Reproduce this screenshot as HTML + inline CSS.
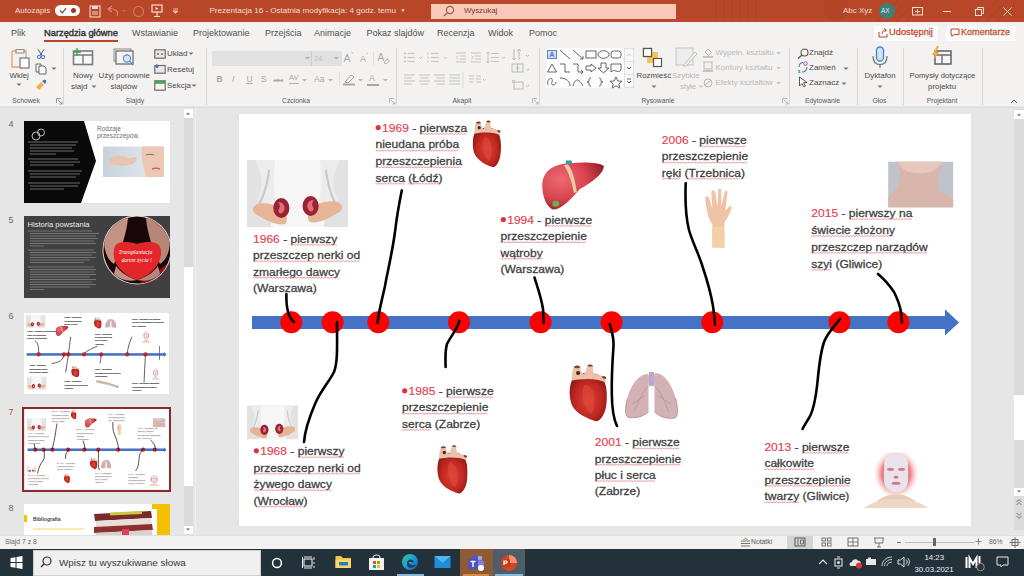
<!DOCTYPE html>
<html><head><meta charset="utf-8">
<style>
*{margin:0;padding:0;box-sizing:border-box}
html,body{width:1024px;height:576px;overflow:hidden;background:#e6e6e6;font-family:"Liberation Sans",sans-serif}
.a{position:absolute}
.t{position:absolute;white-space:nowrap;line-height:1}
#title{left:0;top:0;width:1024px;height:22px;background:#b8472a}
#tabs{left:0;top:22px;width:1024px;height:22px;background:#f3f2f1}
#ribbon{left:0;top:44px;width:1024px;height:62px;background:#f3f2f1}
.tab{position:absolute;top:29px;font-size:9px;color:#505050;white-space:nowrap;line-height:1;}
.gl{position:absolute;top:98px;font-size:6.8px;color:#5a5a5a;white-space:nowrap;line-height:1;transform:translateX(-50%)}
.sep{position:absolute;top:48px;width:1px;height:57px;background:#d8d8d8}
.rl{position:absolute;font-size:8px;color:#4a4a4a;white-space:nowrap;line-height:1}
.dis{color:#b9b9b9}
.ic{position:absolute;overflow:visible}
#status{left:0;top:535px;width:1024px;height:14px;background:#f3f2f1}
#taskbar{left:0;top:549px;width:1024px;height:27px;background:#22313a}
.thumb{position:absolute;background:#fff}
</style></head><body>

<!-- TITLE BAR -->
<div id="title" class="a"></div>
<div class="t" style="left:15px;top:7px;font-size:8px;color:#f6dcd3">Autozapis</div>
<div class="a" style="left:54.5px;top:5px;width:25px;height:11px;border-radius:6px;background:#fff"></div>
<svg class="ic" style="left:59px;top:7px" width="8" height="7"><path d="M1,3.5 L3.3,5.8 L7,1.2" stroke="#8b3a2a" stroke-width="1.2" fill="none"/></svg>
<div class="a" style="left:71px;top:8px;width:5px;height:5px;border-radius:3px;background:#9a3a22"></div>
<svg class="ic" style="left:89px;top:5px" width="12" height="13"><rect x="1" y="1" width="10" height="11" fill="none" stroke="#f4d6cc" stroke-width="1.1"/><rect x="3" y="1" width="6" height="3" fill="#f4d6cc"/><path d="M3,7 h6 M3,9 h6" stroke="#f4d6cc" stroke-width="1"/></svg>
<svg class="ic" style="left:106px;top:5px" width="22" height="12"><path d="M2,4 L6,1 M2,4 L6,7 M2,4 C9,3 13,6 11,11" stroke="#d88a78" stroke-width="1.1" fill="none"/><path d="M16,5 l2,2 l2,-2" fill="#c9755f"/></svg>
<svg class="ic" style="left:132px;top:4px" width="13" height="14"><circle cx="6.5" cy="7.5" r="5" fill="none" stroke="#d07a65" stroke-width="1.1"/></svg>
<svg class="ic" style="left:151px;top:4px" width="12" height="14"><rect x="1" y="1" width="10" height="7" fill="none" stroke="#f6dcd3" stroke-width="1.2"/><path d="M6,8 V12 M3,12.5 H9" stroke="#f6dcd3" stroke-width="1.2"/><path d="M4.5,3 L7.5,4.5 L4.5,6Z" fill="#f6dcd3"/></svg>
<svg class="ic" style="left:172px;top:8px" width="7" height="6"><path d="M1,1 h5 M1,3 l2.5,2.5 l2.5,-2.5z" stroke="#e9b9aa" stroke-width="1" fill="#e9b9aa"/></svg>
<div class="t" style="left:209.5px;top:7px;font-size:8.05px;color:#f6dcd3">Prezentacja 16 - Ostatnia modyfikacja: 4 godz. temu&nbsp;&nbsp;<span style="font-size:5px;vertical-align:1.5px">▼</span></div>
<div class="a" style="left:431px;top:3.5px;width:245px;height:15.5px;background:#f8c9b8"></div>
<svg class="ic" style="left:443px;top:5px" width="12" height="12"><circle cx="7" cy="5" r="3.6" fill="none" stroke="#8a5a50" stroke-width="1.1"/><path d="M4.4,7.6 L1,11" stroke="#8a5a50" stroke-width="1.2"/></svg>
<div class="t" style="left:464px;top:7px;font-size:7.8px;color:#6e3e34">Wyszukaj</div>
<!-- stripes deco right -->
<div class="a" style="left:0;top:18.5px;width:1024px;height:3.5px;background:#bf4630"></div>
<svg class="ic" style="left:676px;top:0" width="348" height="22"><g stroke="#a8401f" stroke-width="1.5" opacity="0.35"><path d="M40,0 V22 M48,0 V22 M56,0 V22 M64,0 V22 M72,0 V22 M80,0 V22"/><path d="M200,22 L222,0 M210,22 L232,0 M220,22 L242,0 M230,22 L252,0 M300,22 L322,0 M310,22 L332,0 M320,22 L342,0"/></g><circle cx="160" cy="8" r="13" fill="#a8401f" opacity="0.3"/></svg>
<div class="t" style="left:843px;top:7px;font-size:8px;color:#f6dcd3">Abc Xyz</div>
<div class="a" style="left:878.5px;top:3px;width:16px;height:16px;border-radius:8px;background:#3f7d75"></div>
<div class="t" style="left:881px;top:7.5px;font-size:6.5px;color:#dfeeea">AX</div>
<svg class="ic" style="left:912px;top:7px" width="11" height="9"><rect x="0.5" y="0.5" width="10" height="7.5" fill="none" stroke="#f6dcd3" stroke-width="1"/><path d="M3,4.5 h5 M5.5,2.5 v4" stroke="#f6dcd3" stroke-width="0.9"/></svg>
<div class="a" style="left:943px;top:11px;width:8px;height:1px;background:#f6dcd3"></div>
<svg class="ic" style="left:975px;top:7px" width="10" height="10"><rect x="0.5" y="2.5" width="6" height="6" fill="none" stroke="#f6dcd3" stroke-width="1"/><path d="M2.5,2.5 V0.5 H8.5 V6.5 H6.5" fill="none" stroke="#f6dcd3" stroke-width="1"/></svg>
<svg class="ic" style="left:1003px;top:7px" width="9" height="9"><path d="M0.5,0.5 L8.5,8.5 M8.5,0.5 L0.5,8.5" stroke="#f6dcd3" stroke-width="1"/></svg>

<!-- TABS -->
<div id="tabs" class="a"></div>
<div class="tab" style="left:11px">Plik</div>
<div class="tab" style="left:44px;color:#333;font-size:9.3px;top:28.5px;-webkit-text-stroke:0.4px #333">Narzędzia główne</div>
<div class="a" style="left:44px;top:40px;width:74px;height:2px;background:#b8472a"></div>
<div class="tab" style="left:132px">Wstawianie</div>
<div class="tab" style="left:193px">Projektowanie</div>
<div class="tab" style="left:265px">Przejścia</div>
<div class="tab" style="left:314px">Animacje</div>
<div class="tab" style="left:366.5px">Pokaz slajdów</div>
<div class="tab" style="left:437px">Recenzja</div>
<div class="tab" style="left:488px">Widok</div>
<div class="tab" style="left:529px">Pomoc</div>
<div class="a" style="left:874px;top:25.5px;width:64px;height:15px;background:#fbfbfb"></div>
<svg class="ic" style="left:878px;top:28px" width="10" height="10"><path d="M1,4 V9 H9 V6 M4,6 C4,3 6,2 8,2 M6,0.5 L8.5,2 L6.5,4" stroke="#b8472a" stroke-width="1" fill="none"/></svg>
<div class="t" style="left:889px;top:28px;font-size:9.3px;color:#bf5236;-webkit-text-stroke:0.3px #bf5236">Udostępnij</div>
<div class="a" style="left:945.5px;top:25.5px;width:70px;height:15px;background:#fbfbfb"></div>
<svg class="ic" style="left:950px;top:28px" width="10" height="10"><path d="M1,1 H9 V6.5 H4 L2,8.5 V6.5 H1Z" stroke="#b8472a" stroke-width="1" fill="none"/></svg>
<div class="t" style="left:961px;top:28px;font-size:9.1px;color:#bf5236;-webkit-text-stroke:0.3px #bf5236">Komentarze</div>

<div id="ribbon" class="a"></div>
<div class="sep" style="left:63px"></div>
<div class="sep" style="left:206px"></div>
<div class="sep" style="left:395.5px"></div>
<div class="sep" style="left:538.5px"></div>
<div class="sep" style="left:789px"></div>
<div class="sep" style="left:857px"></div>
<div class="sep" style="left:903px"></div>
<div class="sep" style="left:982px"></div>
<div class="gl" style="left:26px">Schowek</div>
<div class="gl" style="left:135px">Slajdy</div>
<div class="gl" style="left:296px">Czcionka</div>
<div class="gl" style="left:462px">Akapit</div>
<div class="gl" style="left:658px">Rysowanie</div>
<div class="gl" style="left:822.5px">Edytowanie</div>
<div class="gl" style="left:879.5px">Głos</div>
<div class="gl" style="left:942px">Projektant</div>
<!-- launchers -->
<svg class="ic" style="left:56px;top:98px" width="7" height="7"><path d="M0.5,0.5 H5 M0.5,0.5 V5 M2,2 L6,6 M6,3.5 V6 H3.5" stroke="#888" stroke-width="0.8" fill="none"/></svg>
<svg class="ic" style="left:389px;top:98px" width="7" height="7"><path d="M0.5,0.5 H5 M0.5,0.5 V5 M2,2 L6,6 M6,3.5 V6 H3.5" stroke="#aaa" stroke-width="0.8" fill="none"/></svg>
<svg class="ic" style="left:532px;top:98px" width="7" height="7"><path d="M0.5,0.5 H5 M0.5,0.5 V5 M2,2 L6,6 M6,3.5 V6 H3.5" stroke="#aaa" stroke-width="0.8" fill="none"/></svg>
<svg class="ic" style="left:782px;top:98px" width="7" height="7"><path d="M0.5,0.5 H5 M0.5,0.5 V5 M2,2 L6,6 M6,3.5 V6 H3.5" stroke="#aaa" stroke-width="0.8" fill="none"/></svg>
<svg class="ic" style="left:1010px;top:99px" width="8" height="5"><path d="M1,4 L4,1 L7,4" stroke="#555" stroke-width="1" fill="none"/></svg>

<!-- SCHOWEK -->
<svg class="ic" style="left:10px;top:48px" width="22" height="22"><path d="M2,3 H6 M14,3 H16 V10 M2,3 V19 H9" stroke="#e3a462" stroke-width="1.3" fill="none"/><path d="M6,1.5 H14 V5 H6Z" fill="none" stroke="#8a8a8a" stroke-width="1.1"/><rect x="10" y="10" width="9" height="10" fill="#fff" stroke="#6a6a6a" stroke-width="1.1"/></svg>
<div class="rl" style="left:9.5px;top:72px;font-size:7.9px">Wklej</div>
<svg class="ic" style="left:16px;top:83px" width="6" height="4"><path d="M0.5,0.5 L3,3 L5.5,0.5Z" fill="#777"/></svg>
<svg class="ic" style="left:36px;top:48.5px" width="10" height="10"><path d="M2,0.5 L6.5,7 M8,0.5 L3.5,7" stroke="#555" stroke-width="1"/><circle cx="3" cy="8" r="1.6" fill="none" stroke="#4a8ad4" stroke-width="1.1"/><circle cx="7" cy="8" r="1.6" fill="none" stroke="#4a8ad4" stroke-width="1.1"/></svg>
<svg class="ic" style="left:35px;top:63px" width="12" height="12"><path d="M1,1 H6 V9 H1Z" fill="none" stroke="#666" stroke-width="1"/><path d="M4,3 H9 L11,5 V11 H4Z" fill="#fff" stroke="#666" stroke-width="1"/></svg>
<svg class="ic" style="left:50.5px;top:67px" width="6" height="4"><path d="M0.5,0.5 L3,3 L5.5,0.5Z" fill="#777"/></svg>
<svg class="ic" style="left:35px;top:79px" width="12" height="11"><path d="M1,8 L6,3 L9,6 L4,11Z" fill="#f0b050"/><path d="M7,2 L10,0.5 L11.5,2 L10,5Z" fill="#4a6aa0"/></svg>

<!-- SLAJDY -->
<svg class="ic" style="left:72px;top:48px" width="22" height="18"><rect x="1.5" y="3" width="19" height="13.5" fill="#f8f8f8" stroke="#7a7a7a" stroke-width="1.6"/><path d="M1.5,7 H20.5 M11,7 V16.5" stroke="#7a7a7a" stroke-width="1.4"/><path d="M5,0 V8 M1,4 H9" stroke="#3aa34a" stroke-width="1.4"/></svg>
<div class="rl" style="left:73px;top:72px">Nowy</div>
<div class="rl" style="left:71px;top:83px">slajd</div>
<svg class="ic" style="left:91px;top:84.5px" width="6" height="4"><path d="M0.5,0.5 L3,3 L5.5,0.5Z" fill="#777"/></svg>
<svg class="ic" style="left:113px;top:48px" width="24" height="20"><rect x="1" y="1" width="17" height="12" fill="none" stroke="#8a8a8a" stroke-width="1"/><rect x="3" y="3" width="17" height="13" fill="#f4f4f4" stroke="#7a7a7a" stroke-width="1.4"/><circle cx="14" cy="10.5" r="3.6" fill="#d6e8f8" stroke="#5a8ac8" stroke-width="1.1"/><path d="M16.5,13 L20,17" stroke="#5a8ac8" stroke-width="1.3"/></svg>
<div class="rl" style="left:98.5px;top:72px;font-size:7.9px">Użyj ponownie</div>
<div class="rl" style="left:110.5px;top:83px">slajdów</div>
<svg class="ic" style="left:153.5px;top:48.5px" width="12" height="10"><rect x="0.8" y="0.8" width="10.4" height="8.4" fill="#e8e8e8" stroke="#6f6f6f" stroke-width="1.2"/><path d="M3,5 h2 M7,5 h2" stroke="#6f6f6f" stroke-width="1.3"/></svg>
<div class="rl" style="left:167px;top:50px">Układ</div>
<svg class="ic" style="left:188px;top:52px" width="6" height="4"><path d="M0.5,0.5 L3,3 L5.5,0.5Z" fill="#777"/></svg>
<svg class="ic" style="left:153.5px;top:64px" width="12" height="10"><rect x="0.8" y="1.5" width="10.4" height="7.7" fill="#e8e8e8" stroke="#6f6f6f" stroke-width="1.2"/><path d="M3,0 V4 M1.5,2.5 L3,4 L4.5,2.5" stroke="#3a7ac8" stroke-width="1"/></svg>
<div class="rl" style="left:167px;top:65.5px">Resetuj</div>
<svg class="ic" style="left:153.5px;top:79.5px" width="12" height="11"><rect x="0.8" y="0.8" width="10.4" height="9.4" fill="#f4f4f4" stroke="#6f6f6f" stroke-width="1.2"/><rect x="0.8" y="0.8" width="10.4" height="3" fill="#4aa35a"/></svg>
<div class="rl" style="left:167px;top:81.5px">Sekcja</div>
<svg class="ic" style="left:191px;top:84px" width="6" height="4"><path d="M0.5,0.5 L3,3 L5.5,0.5Z" fill="#777"/></svg>

<!-- CZCIONKA -->
<div class="a" style="left:212px;top:51px;width:99px;height:15px;background:#e1e1e1"></div>
<div class="a" style="left:311px;top:51px;width:31px;height:15px;background:#e1e1e1;border-left:1px solid #cfcfcf"></div>
<svg class="ic" style="left:305px;top:57px" width="5" height="3"><path d="M0,0 L2.5,2.5 L5,0Z" fill="#b0b0b0"/></svg>
<div class="t" style="left:314px;top:54.5px;font-size:7.5px;color:#bdbdbd">24</div>
<svg class="ic" style="left:334px;top:57px" width="5" height="3"><path d="M0,0 L2.5,2.5 L5,0Z" fill="#b0b0b0"/></svg>
<div class="t" style="left:343.5px;top:53px;font-size:10.5px;color:#a8a8a8">A</div><div class="t" style="left:351px;top:52px;font-size:5px;color:#a8a8a8">^</div>
<div class="t" style="left:360px;top:54.5px;font-size:9px;color:#a8a8a8">A</div><div class="t" style="left:366.5px;top:52.5px;font-size:5px;color:#a8a8a8">ˇ</div>
<div class="a" style="left:373px;top:52px;width:1px;height:13px;background:#dcdcdc"></div>
<div class="t" style="left:377.5px;top:53px;font-size:10px;color:#a8a8a8">A</div><svg class="ic" style="left:383px;top:58px" width="7" height="6"><path d="M1,5 L4,1 L6.5,3 L3.5,5.5Z" fill="none" stroke="#aaa" stroke-width="0.9"/></svg>
<div class="t" style="left:216.5px;top:75px;font-size:8.5px;color:#a8a8a8;font-weight:bold">B</div>
<div class="t" style="left:232px;top:75px;font-size:8.5px;color:#a8a8a8;font-style:italic">I</div>
<div class="t" style="left:246.5px;top:75px;font-size:8.5px;color:#a8a8a8;text-decoration:underline">U</div>
<div class="t" style="left:261px;top:75px;font-size:8.5px;color:#a8a8a8">S</div>
<div class="t" style="left:273.5px;top:76.5px;font-size:6px;color:#a8a8a8;text-decoration:line-through">abc</div>
<div class="t" style="left:289px;top:74px;font-size:7.5px;color:#a8a8a8">AV</div><div class="a" style="left:289px;top:83px;width:10px;height:1px;background:#b0b0b0"></div>
<svg class="ic" style="left:302px;top:79px" width="5" height="3"><path d="M0,0 L2.5,2.5 L5,0Z" fill="#b8b8b8"/></svg>
<div class="t" style="left:314px;top:75px;font-size:8.5px;color:#a8a8a8">Aa</div>
<svg class="ic" style="left:327.5px;top:79px" width="5" height="3"><path d="M0,0 L2.5,2.5 L5,0Z" fill="#b8b8b8"/></svg>
<div class="a" style="left:338.5px;top:72px;width:1px;height:14px;background:#dcdcdc"></div>
<svg class="ic" style="left:342px;top:73px" width="14" height="13"><path d="M3,9 L9,2 L12,4 L6,10Z" fill="none" stroke="#a0a0a0" stroke-width="1"/><rect x="1" y="10.5" width="12" height="2" fill="#a8a8a8"/></svg>
<svg class="ic" style="left:358px;top:79px" width="5" height="3"><path d="M0,0 L2.5,2.5 L5,0Z" fill="#b8b8b8"/></svg>
<div class="t" style="left:369px;top:73.5px;font-size:9px;color:#a8a8a8">A</div><div class="a" style="left:367px;top:84px;width:12px;height:2px;background:#a8a8a8"></div>
<svg class="ic" style="left:383px;top:79px" width="5" height="3"><path d="M0,0 L2.5,2.5 L5,0Z" fill="#b8b8b8"/></svg>

<!-- AKAPIT -->
<svg class="ic" style="left:403px;top:52px" width="130" height="40"><g stroke="#bcbcbc" stroke-width="0.85" fill="#bcbcbc">
<circle cx="2" cy="1.5" r="1" stroke="none"/><circle cx="2" cy="5.5" r="1" stroke="none"/><circle cx="2" cy="9.5" r="1" stroke="none"/>
<path d="M4.5,1.5 H12 M4.5,5.5 H12 M4.5,9.5 H12" />
<path d="M16,5 l1.5,1.5 l1.5,-1.5" fill="none"/>
<path d="M28,1.5 H36 M28,5.5 H36 M28,9.5 H36 M25,0.5 V2.5 M25,4.5 V6.5 M25,8.5 V10.5"/>
<path d="M41,5 l1.5,1.5 l1.5,-1.5" fill="none"/>
<path d="M53,1 H63 M57,4 H63 M57,7 H63 M53,10 H63 M55,3.5 L53.5,5.5 L55,7.5" fill="none"/>
<path d="M68,1 H78 M72,4 H78 M72,7 H78 M68,10 H78 M68.5,3.5 L70,5.5 L68.5,7.5" fill="none"/>
<path d="M88,1.5 H96 M88,5.5 H96 M88,9.5 H96 M85,0 V11 M83.5,1.5 L85,0 L86.5,1.5 M83.5,9.5 L85,11 L86.5,9.5" fill="none"/>
<path d="M99,5 l1.5,1.5 l1.5,-1.5" fill="none"/>
<path d="M1,23 H12 M1,26 H9 M1,29 H12 M1,32 H9"/>
<path d="M16,23 H27 M17.5,26 H25.5 M16,29 H27 M17.5,32 H25.5"/>
<path d="M31,23 H42 M34,26 H42 M31,29 H42 M34,32 H42"/>
<path d="M46,23 H57 M46,26 H57 M46,29 H57 M46,32 H57"/>
<path d="M66,24 H71 M66,27 H71 M66,30 H71 M73,24 H78 M73,27 H78 M73,30 H78"/>
<path d="M80,27 l1.5,1.5 l1.5,-1.5" fill="none"/>
</g>
<path d="M60,20 V36" stroke="#dcdcdc" stroke-width="1"/>
<g stroke="#b4b4b4" stroke-width="0.9" fill="none">
<path d="M111,-3 V8 M109,6 L111,8 L113,6 M116,-3 V8 M114,-1 L116,-3 L118,-1"/>
<path d="M123,3 l1.5,1.5 l1.5,-1.5"/>
<rect x="109" y="12" width="11" height="8"/><path d="M114.5,12 V20 M112.5,16 H116.5"/>
<path d="M123,17 l1.5,1.5 l1.5,-1.5"/>
<rect x="111" y="30" width="9" height="7"/><path d="M109,28 L112,31 M109,31 L112,28"/>
<path d="M123,33 l1.5,1.5 l1.5,-1.5"/>
</g></svg>

<!-- RYSOWANIE -->
<div class="a" style="left:545.5px;top:47.5px;width:78px;height:40px;background:#fdfdfd"></div>
<div class="a" style="left:623.5px;top:47.5px;width:10px;height:40px;background:#f8f8f8;border:1px solid #e0e0e0"></div>
<svg class="ic" style="left:545.5px;top:47.5px" width="90" height="41"><g stroke="#555" stroke-width="0.9" fill="none">
<rect x="1.5" y="2.5" width="9" height="8" fill="#cfe0f4" stroke="#4a7ac0"/><path d="M4,9 L6,4 L8,9 M4.8,7.5 H7.2" stroke="#3a6ab0"/>
<path d="M14,2 L24,11"/><path d="M27,2 L37,11 M37,8 V11 H34"/>
<rect x="40" y="3" width="10" height="7"/><ellipse cx="57.5" cy="6.5" rx="5.5" ry="3.8"/><rect x="65" y="3" width="10" height="7" rx="2.5"/>
<path d="M1.5,24 L6,16 L10.5,24Z"/><path d="M14,16 H19 V24 H24"/><path d="M27,16 H32 V24 H37 M35,22 L37,24 L35,26"/>
<path d="M40,18 H45 V16 L50,20 L45,24 V22 H40Z"/><path d="M55,15 V20 H52 L57.5,25 L63,20 H60 V15Z"/><path d="M65,16 H75 V22 C72,26 68,20 65,24Z"/>
<path d="M2,37 C0,30 8,28 6,34 C4,38 10,38 10,34"/><path d="M14,30 C20,30 24,33 24,38"/><path d="M27,38 C29,30 33,30 37,38"/>
<path d="M45,30 C43,30 43,31 43,33 C43,34 42,34 41,34 C42,34 43,34 43,35 C43,37 43,38 45,38"/><path d="M53,30 C55,30 55,31 55,33 C55,34 56,34 57,34 C56,34 55,34 55,35 C55,37 55,38 53,38"/>
<path d="M70,29 L71.8,33 L76,33.3 L72.8,36 L73.8,40 L70,37.8 L66.2,40 L67.2,36 L64,33.3 L68.2,33 Z"/>
</g>
<path d="M81,8 l2,-2 l2,2" stroke="#ccc" fill="none"/><path d="M81,19 l2,2 l2,-2" stroke="#666" fill="none"/><path d="M81,31 h4 M81,33 l2,2 l2,-2" stroke="#666" fill="none"/>
<path d="M78.5,13.5 H88.5 M78.5,26.5 H88.5" stroke="#e0e0e0"/>
</svg>
<svg class="ic" style="left:642px;top:47px" width="22" height="21"><rect x="1.5" y="1.5" width="8" height="8" fill="#fff" stroke="#555" stroke-width="1.2"/><rect x="5" y="5" width="11" height="11" fill="#f6c45e"/><rect x="1.5" y="1.5" width="8" height="8" fill="#fff" stroke="#555" stroke-width="1.2"/><rect x="11.5" y="11.5" width="8" height="8" fill="#fff" stroke="#555" stroke-width="1.2"/></svg>
<div class="rl" style="left:636.5px;top:72px;font-size:7.9px">Rozmieść</div>
<svg class="ic" style="left:650.5px;top:84.5px" width="6" height="4"><path d="M0.5,0.5 L3,3 L5.5,0.5Z" fill="#777"/></svg>
<svg class="ic" style="left:675px;top:47px" width="24" height="22"><rect x="1" y="1" width="17" height="17" fill="#ececec" stroke="#c4c4c4" stroke-width="1"/><path d="M8,19 L20,5 L22,7 L11,19Z" fill="#f3f3f3" stroke="#c0c0c0" stroke-width="1"/></svg>
<div class="rl dis" style="left:672px;top:72px;font-size:7.9px">Szybkie</div>
<div class="rl dis" style="left:680px;top:83px;font-size:7.9px">style</div>
<svg class="ic" style="left:698px;top:85px" width="6" height="4"><path d="M0.5,0.5 L3,3 L5.5,0.5Z" fill="#ccc"/></svg>
<svg class="ic" style="left:702px;top:46.5px" width="12" height="42"><g fill="none" stroke="#b8b8b8" stroke-width="1"><path d="M3,5 L6,2 L9.5,5.5 L6.5,8.5Z"/><path d="M1,10 H11" stroke-width="1.6"/><rect x="2" y="15" width="8" height="7"/><path d="M1,24 H11" stroke-width="1.6"/><circle cx="6" cy="36" r="4"/><path d="M3,38 L9,33"/></g></svg>
<div class="rl dis" style="left:715.5px;top:49px">Wypełn. kształtu</div>
<div class="rl dis" style="left:715.5px;top:64px">Kontury kształtu</div>
<div class="rl dis" style="left:715.5px;top:79px">Efekty kształtów</div>
<svg class="ic" style="left:775.5px;top:51.5px" width="5" height="34"><path d="M0,0 L2.5,2.5 L5,0Z M0,15 L2.5,17.5 L5,15Z M0,30 L2.5,32.5 L5,30Z" fill="#c8c8c8"/></svg>

<!-- EDYTOWANIE -->
<svg class="ic" style="left:797px;top:47.5px" width="12" height="11"><circle cx="7.5" cy="4.5" r="3.5" fill="none" stroke="#555" stroke-width="1.1"/><path d="M5,7 L1,10.5" stroke="#555" stroke-width="1.3"/></svg>
<div class="rl" style="left:809px;top:49px">Znajdź</div>
<svg class="ic" style="left:797px;top:61px" width="12" height="13"><path d="M2,6 C2,3 4,1.5 6,1.5" stroke="#3a7ac8" stroke-width="1.1" fill="none"/><path d="M10,6 C10,9 8,11 5,11" stroke="#3a7ac8" stroke-width="1.1" fill="none"/><circle cx="8.5" cy="2.5" r="1.8" fill="none" stroke="#c040a0" stroke-width="1"/><path d="M1.5,9 L3,12 M3,9 L1.5,12" stroke="#3aa0a0" stroke-width="1"/></svg>
<div class="rl" style="left:809px;top:64px">Zamień</div>
<svg class="ic" style="left:843px;top:67px" width="6" height="4"><path d="M0.5,0.5 L3,3 L5.5,0.5Z" fill="#777"/></svg>
<svg class="ic" style="left:798px;top:76px" width="10" height="12"><path d="M1.5,1 L1.5,10 L4,7.5 L6,11 L7.5,10 L5.5,6.8 L9,6.5Z" fill="#fff" stroke="#444" stroke-width="0.9"/></svg>
<div class="rl" style="left:809px;top:79px">Zaznacz</div>
<svg class="ic" style="left:841px;top:82px" width="6" height="4"><path d="M0.5,0.5 L3,3 L5.5,0.5Z" fill="#777"/></svg>

<!-- GLOS -->
<svg class="ic" style="left:871px;top:45.5px" width="18" height="24"><rect x="5.5" y="1" width="7" height="14" rx="3.5" fill="#cfe3f7" stroke="#3a86d4" stroke-width="1.3"/><path d="M2,10 C2,16 5,18.5 9,18.5 C13,18.5 16,16 16,10" fill="none" stroke="#666" stroke-width="1.1"/><path d="M9,18.5 V22" stroke="#666" stroke-width="1.1"/></svg>
<div class="rl" style="left:864.5px;top:72px;font-size:7.9px">Dyktafon</div>
<svg class="ic" style="left:876.5px;top:84.5px" width="6" height="4"><path d="M0.5,0.5 L3,3 L5.5,0.5Z" fill="#777"/></svg>

<!-- PROJEKTANT -->
<svg class="ic" style="left:931px;top:45.5px" width="22" height="20"><rect x="4" y="5" width="16" height="13" fill="#f4f4f4" stroke="#6a6a6a" stroke-width="1.6"/><path d="M4,9 H20 M11,9 V18" stroke="#6a6a6a" stroke-width="1.3"/><path d="M6,0 L1,9 L4,9 L2,15 L8,6 L5,6 L8,0Z" fill="#f2a93a"/></svg>
<div class="rl" style="left:909.5px;top:72px;font-size:7.7px">Pomysły dotyczące</div>
<div class="rl" style="left:928px;top:83px;font-size:7.9px">projektu</div>


<!-- MAIN AREA -->
<div class="a" style="left:0;top:107px;width:1024px;height:1px;background:#dcdcdc"></div>
<div class="a" style="left:183.5px;top:109px;width:9px;height:426px;background:#dadada"></div>
<div class="a" style="left:183.5px;top:109px;width:9px;height:8.5px;background:#fff"></div>
<svg class="ic" style="left:185px;top:110px" width="6" height="6"><path d="M1,4.5 L3,2.5 L5,4.5Z" fill="#666"/></svg>
<div class="a" style="left:183.5px;top:267px;width:9px;height:219px;background:#fff"></div>
<div class="a" style="left:183.5px;top:525.5px;width:9px;height:8.5px;background:#fff"></div>
<svg class="ic" style="left:185px;top:526.5px" width="6" height="6"><path d="M1,1.5 L3,3.5 L5,1.5Z" fill="#666"/></svg>
<div class="a" style="left:194.5px;top:108px;width:1px;height:427px;background:#efefef"></div>
<!-- right scrollbar -->
<div class="a" style="left:1014px;top:109px;width:10px;height:421px;background:#dadada"></div>
<div class="a" style="left:1014px;top:109.5px;width:10px;height:9px;background:#fff"></div>
<svg class="ic" style="left:1016px;top:111px" width="6" height="6"><path d="M1,4.5 L3,2.5 L5,4.5Z" fill="#666"/></svg>
<div class="a" style="left:1014px;top:395px;width:10px;height:45px;background:#fff"></div>
<div class="a" style="left:1014px;top:487.5px;width:10px;height:8.5px;background:#fff"></div>
<svg class="ic" style="left:1016px;top:489px" width="6" height="6"><path d="M1,1.5 L3,3.5 L5,1.5Z" fill="#666"/></svg>
<svg class="ic" style="left:1015px;top:498px" width="8" height="22"><path d="M1.5,4 L4,1.5 L6.5,4 M1.5,7 L4,4.5 L6.5,7 M1.5,15 L4,17.5 L6.5,15 M1.5,18 L4,20.5 L6.5,18" stroke="#777" stroke-width="1" fill="none"/></svg>

<div class="t" style="left:8.5px;top:119.5px;font-size:9px;color:#666">4</div>
<div class="t" style="left:8.5px;top:215.5px;font-size:9px;color:#666">5</div>
<div class="t" style="left:8.5px;top:311.5px;font-size:9px;color:#666">6</div>
<div class="t" style="left:8.5px;top:407.5px;font-size:9px;color:#c0502e">7</div>
<div class="t" style="left:8.5px;top:503.5px;font-size:9px;color:#666">8</div>
<!-- slide 4 -->
<svg class="a" style="left:23.5px;top:120.5px" width="146" height="82" viewBox="0 0 146 82">
<rect width="146" height="82" fill="#fff"/>
<path d="M0,0 H60 L72,40 L57,82 H0Z" fill="#0a0a0a"/>
<circle cx="12" cy="15" r="4" fill="none" stroke="#ccc" stroke-width="0.9"/><circle cx="17" cy="11.5" r="3.5" fill="none" stroke="#ccc" stroke-width="0.9"/>
<g stroke="#9a9a9a" stroke-width="0.7">
<path d="M4,21 H54 M6,24 H52 M6,27 H48 M6,30 H50 M6,33 H32"/>
<path d="M4,38 H54 M6,41 H56 M6,44 H50"/>
<path d="M4,50 H58 M6,53 H56 M6,56 H52"/>
<path d="M4,62 H56 M6,65 H54 M6,68 H40"/>
</g>
<text x="73" y="10" font-family="Liberation Sans" font-size="6.5" fill="#707070">Rodzaje</text>
<text x="73" y="17" font-family="Liberation Sans" font-size="6.5" fill="#707070">przeszczepów.</text>
<defs><linearGradient id="g4" x1="0" x2="1"><stop offset="0" stop-color="#c6d2dc"/><stop offset="1" stop-color="#e8ecef"/></linearGradient></defs>
<rect x="79" y="25.5" width="61" height="30.5" fill="url(#g4)"/>
<path d="M85,38 C92,34 100,34 104,37 L112,36 C114,40 110,44 104,44 C98,46 90,44 85,42Z" fill="#e8c4b0"/>
<path d="M118,25.5 H140 V56 H122 C120,48 116,36 118,25.5Z" fill="#ecc8b4"/><path d="M122,34 C124,33 128,33 130,34" stroke="#7a6a60" stroke-width="1" fill="none"/>
<path d="M128,48 C130,47 134,47 136,48" stroke="#c86060" stroke-width="1.4" fill="none"/>
</svg>
<!-- slide 5 -->
<svg class="a" style="left:23.5px;top:216px" width="146" height="82" viewBox="0 0 146 82">
<rect width="146" height="82" fill="#404040"/>
<text x="3.5" y="10.5" font-family="Liberation Sans" font-size="7.6" fill="#eeeeee">Historia powstania</text>
<g stroke="#8c8c8c" stroke-width="0.7">
<path d="M4,15 H68 M6,17.5 H75 M6,20 H72 M6,22.5 H74 M6,25 H70 M6,27.5 H72 M6,30 H20"/>
<path d="M4,34 H70 M6,36.5 H72 M6,39 H68 M6,41.5 H72 M6,44 H66 M6,46.5 H60"/>
<path d="M4,51 H70 M6,53.5 H72 M6,56 H70 M6,58.5 H72 M6,61 H66 M6,63.5 H72 M6,66 H68 M6,68.5 H72 M6,71 H66 M6,73.5 H20"/>
</g>
<defs><clipPath id="c5"><rect width="146" height="82"/></clipPath><clipPath id="c5b"><circle cx="113" cy="34" r="33.5"/></clipPath></defs>
<g clip-path="url(#c5)">
<circle cx="113" cy="34" r="34.5" fill="#e0d4d4"/>
<g clip-path="url(#c5b)">
<rect x="78" y="0" width="70" height="70" fill="#1a0608"/>
<path d="M82,0 L104,0 C104,10 100,22 98,30 L90,48 C84,44 80,36 80,24Z" fill="#c49284"/>
<path d="M144,0 L122,0 C122,10 126,22 128,30 L136,48 C142,44 146,36 146,24Z" fill="#b88678"/>
<path d="M128,60 L148,44 L148,70 L110,70Z" fill="#a00c14"/>
<path d="M90,34 C90,26 100,24 113,28 C126,24 136,26 137,34 C138,46 130,58 113,64 C96,58 88,46 90,34Z" fill="#e2262a"/>
<path d="M92,50 C98,58 106,62 113,64 C104,66 96,64 90,58Z" fill="#c49284"/>
<path d="M134,50 C128,58 120,62 113,64 C122,66 130,64 136,58Z" fill="#b88678"/>
</g></g>
<text x="94.5" y="37.5" font-family="Liberation Serif" font-style="italic" font-size="5.6" fill="#fff">Transplantacja</text>
<text x="97.5" y="46" font-family="Liberation Serif" font-style="italic" font-size="5.6" fill="#fff">darem życia !</text>
</svg>
<!-- slide 6 -->
<svg class="a" style="left:24px;top:312.5px" width="145" height="81.5" viewBox="0 0 732 412" preserveAspectRatio="none">
<rect width="732" height="412" fill="#fff"/>
<use href="#kidneys" x="9" y="9" width="100" height="66"/>
<use href="#kidneys" x="14" y="321" width="100" height="67"/>
<use href="#liver" x="159" y="63" width="66" height="54"/>
<use href="#heart" x="353" y="21" width="39" height="58"/>
<use href="#lungs" x="409" y="29" width="58" height="46"/>
<use href="#heart" x="238" y="267" width="42" height="58"/>
<path d="M365,345 C400,350 440,360 478,375" stroke="#c8b8a8" stroke-width="12" fill="none"/>
<use href="#face" x="592" y="92" width="50" height="58"/>
<use href="#face" x="642" y="279" width="46" height="59"/>
<g font-family="Liberation Sans" font-size="12" fill="#505050" stroke="#606060" stroke-width="1.2">
<text x="17" y="97"><tspan fill="#e3414f">1966</tspan> - pierwszy przeszczep</text><text x="17" y="114">nerki od zmarłego</text><text x="17" y="131">dawcy (Warszawa)</text>
<text x="204" y="27"><tspan fill="#e3414f">1969</tspan> - pierwsza</text><text x="204" y="44">przeszczepienie</text><text x="204" y="61">serca (Łódź)</text>
<text x="359" y="110"><tspan fill="#e3414f">2001</tspan> - pierwsze</text><text x="359" y="127">przeszczepienie</text><text x="359" y="144">płuc i serca</text><text x="359" y="161">(Zabrze)</text>
<text x="546" y="35"><tspan fill="#e3414f">2015</tspan> - pierwszy na świecie</text><text x="546" y="52">złożony przeszczep narządów</text><text x="546" y="69">szyi (Gliwice)</text>
<text x="28" y="269"><tspan fill="#e3414f">1968</tspan> - pierwszy</text><text x="28" y="286">przeszczep nerki</text><text x="28" y="303">od żywego dawcy</text>
<text x="204" y="351"><tspan fill="#e3414f">1985</tspan> - pierwsze</text><text x="204" y="368">przeszczepienie serca</text><text x="204" y="385">(Zabrze)</text>
<text x="358" y="289"><tspan fill="#e3414f">1994</tspan> - pierwsze</text><text x="358" y="306">przeszczepienie wątroby</text><text x="358" y="323">(Warszawa)</text>
<text x="546" y="360"><tspan fill="#e3414f">2013</tspan> - pierwsze całkowite</text><text x="546" y="377">przeszczepienie twarzy</text><text x="546" y="394">(Gliwice)</text>
</g>
<rect x="13" y="203" width="694" height="13" fill="#4472c4"/>
<polygon points="706,196 720,209.5 706,223" fill="#4472c4"/>
<g fill="#c0282e"><circle cx="74" cy="209" r="11"/><circle cx="202" cy="209" r="11"/><circle cx="224" cy="209" r="11"/><circle cx="303" cy="209" r="11"/><circle cx="390" cy="209" r="11"/><circle cx="521" cy="209" r="11"/><circle cx="613" cy="209" r="11"/></g>
<g stroke="#383838" stroke-width="4" fill="none">
<path d="M55,140 C70,150 75,170 74,205"/>
<path d="M202,212 C195,240 180,250 140,255"/>
<path d="M224,205 C230,170 232,140 236,120"/>
<path d="M224,212 C218,250 214,280 210,300"/>
<path d="M303,205 C320,190 350,175 370,168"/>
<path d="M390,212 C388,230 386,240 384,255"/>
<path d="M521,205 C526,170 535,140 545,120"/>
<path d="M613,212 C610,260 608,310 606,350"/>
<path d="M684,167 V237" stroke="#3b5ba0"/>
</g>
</svg>
<!-- slide 7 selected -->
<div class="a" style="left:22px;top:406.5px;width:149px;height:85px;border:2px solid #8a2b2b"></div>
<svg class="a" style="left:24.5px;top:409px;--cc:#b02a2e;--lw:3.5;--ts:0;--ts2:0" width="144" height="80.5" viewBox="0 0 732 412" preserveAspectRatio="none"><use href="#s7"/></svg>
<!-- slide 8 -->
<svg class="a" style="left:23.5px;top:504px" width="146" height="31" viewBox="0 0 146 31">
<rect width="146" height="31" fill="#fff"/>
<rect x="0" y="11" width="3" height="7" fill="#f5c400"/>
<text x="9" y="17" font-family="Liberation Sans" font-size="5" font-weight="bold" fill="#444">Bibliografia</text>
<rect x="9" y="24.5" width="52" height="1" fill="#f5d860"/>
<path d="M128,0 H146 V31 H133 V5 H128Z" fill="#f5c000"/>
<path d="M70,10 L127,7 L128,14 L71,17Z" fill="#7a2a2a"/>
<path d="M72,17 L127,14 L128,20 L72,23Z" fill="#e8e0d8"/>
<path d="M86,8.5 L118,7 L118,10 L86,11.5Z" fill="#c8c840"/>
<path d="M70,23 L128,20 L129,26 L70,29Z" fill="#8c3030"/>
<path d="M72,29 L128,26 L128,31 L72,31Z" fill="#d8d0d0"/>
<rect x="98" y="25" width="7" height="6" fill="#e04060"/>
</svg>


<!-- SLIDE -->
<svg class="a" style="left:239px;top:114px" width="732" height="412" viewBox="0 0 732 412"><defs><g id="s7">
<rect width="732" height="412" fill="#fff"/>
<symbol id="heart" viewBox="0 0 100 160" preserveAspectRatio="none">
  <defs><radialGradient id="hg" cx="0.5" cy="0.55" r="0.65"><stop offset="0" stop-color="#dc4236"/><stop offset="0.55" stop-color="#c02820"/><stop offset="1" stop-color="#801414"/></radialGradient></defs>
  <path d="M12,40 C0,56 -2,92 8,116 C20,140 50,154 74,160 C94,150 100,120 100,92 C100,66 94,46 82,36 C64,24 28,26 12,40 Z" fill="url(#hg)"/>
  <path d="M40,62 C30,88 36,118 58,140 C68,130 70,100 64,80 C58,66 46,56 40,62Z" fill="#e04a3c" opacity="0.6"/>
  <path d="M8,48 C6,32 10,18 14,10 C20,8 26,8 30,12 C30,22 34,30 40,32 C44,24 46,14 50,6 C56,4 62,6 64,10 C62,20 64,28 70,32 C78,30 86,34 94,42 L98,54 C86,48 70,44 50,44 C32,44 18,46 8,48 Z" fill="#e8c2aa"/>
  <path d="M12,12 C18,16 26,15 30,12 C26,6 18,6 12,12Z" fill="#7a4436"/>
  <path d="M48,8 C54,11 60,11 64,9 C60,3 52,3 48,8Z" fill="#7a4436"/>
  <circle cx="24" cy="28" r="5.5" fill="#5a2018"/>
  <path d="M86,38 C90,44 96,46 99,42 C97,36 90,34 86,38Z" fill="#7a4436"/>
</symbol>
<symbol id="kidneys" viewBox="0 0 100 67" preserveAspectRatio="none">
  <rect width="100" height="67" fill="#e2e2e2"/>
  <path d="M22,0 L78,0 C80,20 78,50 76,67 L24,67 C22,50 20,20 22,0Z" fill="#f6f6f6"/>
  <path d="M8,0 C14,14 18,26 10,40 C16,44 24,44 28,40 C26,26 26,12 28,0Z" fill="#ececec"/>
  <path d="M92,0 C86,14 82,26 90,40 C84,44 76,44 72,40 C74,26 74,12 72,0Z" fill="#ececec"/>
  <path d="M22,10 C20,22 18,34 12,44" stroke="#b8b8b8" stroke-width="2" fill="none" opacity="0.7"/>
  <path d="M78,10 C80,22 82,34 88,44" stroke="#b8b8b8" stroke-width="2" fill="none" opacity="0.7"/>
  <path d="M6,48 C8,42 20,42 30,46 C38,50 42,58 38,64 C30,66 18,60 12,56 C8,54 5,52 6,48Z" fill="#e6b496"/>
  <path d="M94,46 C92,40 80,40 70,44 C62,48 58,56 62,62 C70,64 82,58 88,54 C92,52 95,50 94,46Z" fill="#e6b496"/>
  <ellipse cx="34" cy="48" rx="8" ry="10" fill="#9a2234"/>
  <path d="M31,42 C36,42 38,46 37,50 C35,55 31,54 31,50 C33,48 33,45 31,42Z" fill="#e0707c"/>
  <ellipse cx="63" cy="46" rx="8" ry="10" fill="#9a2234"/>
  <path d="M66,40 C61,40 59,44 60,48 C62,53 66,52 66,48 C64,46 64,43 66,40Z" fill="#e0707c"/>
</symbol>
<symbol id="liver" viewBox="0 0 62 50" preserveAspectRatio="none">
  <defs><radialGradient id="lg" cx="0.3" cy="0.35" r="0.7"><stop offset="0" stop-color="#ec6a72"/><stop offset="0.6" stop-color="#d8444e"/><stop offset="1" stop-color="#9a2228"/></radialGradient></defs>
  <path d="M0.5,26 C0.5,10 12,4 28,3 C42,2 56,2 62,6 C61,14 50,22 38,29 C30,38 20,50 11,50 C4,46 0.5,36 0.5,26Z" fill="url(#lg)"/>
  <path d="M26,4 C31,10 33,20 35,32 L32,33 C30,22 27,12 22,5Z" fill="#eccca4"/>
  <rect x="24" y="0" width="6" height="4" rx="1" fill="#3a9a9a"/>
  <ellipse cx="14" cy="44" rx="3.5" ry="3" fill="#6ab04a"/>
</symbol>
<symbol id="hand" viewBox="0 0 28 59" preserveAspectRatio="none">
  <path d="M8,59 L8,36 C4,30 2,22 1,10 C1,7 4,7 5,10 L8,20 L7,4 C7,1 10,1 11,4 L13,18 L14,1 C14,-1 17,-1 17,2 L17,18 L20,4 C21,1 24,2 23,5 L21,22 C23,20 26,16 27,18 C28,20 24,28 20,34 L20,59Z" fill="#f0c3a6"/>
  <rect x="8" y="38" width="12" height="21" fill="#f3d0a6"/>
</symbol>
<symbol id="neck" viewBox="0 0 65 46" preserveAspectRatio="none">
  <rect width="65" height="46" fill="#c0c2cc"/>
  <path d="M8,0 L54,0 C50,10 48,22 52,30 C58,34 65,36 65,40 L65,46 L0,46 L0,36 C6,30 12,24 12,14 C12,8 10,4 8,0Z" fill="#d8b6ac"/>
  <path d="M10,0 L54,0 C50,8 42,12 32,12 C20,12 12,8 10,0Z" fill="#e7c6bc"/>
</symbol>
<symbol id="lungs" viewBox="0 0 54 47" preserveAspectRatio="none">
  <rect x="24.5" y="0" width="5" height="14" fill="#bda4d4"/>
  <path d="M23,2 C14,2 6,14 3,26 C0,38 0,46 6,46 C14,46 20,44 24,40 L24,14 C25,8 25,2 23,2Z" fill="#d2b2b4"/>
  <path d="M31,1 C40,1 48,14 51,26 C54,38 54,47 48,47 C40,47 34,44 30,40 L30,14 C29,8 29,1 31,1Z" fill="#d2b2b4"/>
  <path d="M24,14 C18,20 14,28 10,40 M20,24 C16,26 12,30 8,32 M30,14 C36,20 40,28 44,40 M34,24 C38,26 42,30 46,32" stroke="#b890a0" stroke-width="0.8" fill="none"/>
  <path d="M3,26 C0,38 0,46 6,46 C14,46 20,44 24,40 M51,26 C54,38 54,47 48,47 C40,47 34,44 30,40" stroke="#a88890" stroke-width="0.8" fill="none"/>
</symbol>
<symbol id="face" viewBox="0 0 64 56" preserveAspectRatio="none">
  <defs><radialGradient id="fg" cx="0.5" cy="0.45" r="0.5"><stop offset="0.6" stop-color="#f08080"/><stop offset="1" stop-color="#fff" stop-opacity="0"/></radialGradient></defs>
  <ellipse cx="32" cy="24" rx="24" ry="26" fill="url(#fg)"/>
  <path d="M8,56 C10,48 22,42 32,42 C42,42 54,48 56,56Z" fill="#e8cdb6"/>
  <path d="M0,56 C6,50 20,47 32,47 C44,47 58,50 64,56Z" fill="#edd6c4"/>
  <path d="M20,12 C20,4 26,2 32,2 C38,2 44,4 44,12 L44,28 C44,36 38,40 32,40 C26,40 20,36 20,28Z" fill="#e8e4ee"/>
  <ellipse cx="26.5" cy="17" rx="3.5" ry="1.6" fill="#e07080"/>
  <ellipse cx="37.5" cy="17" rx="3.5" ry="1.6" fill="#e07080"/>
  <ellipse cx="32" cy="25" rx="2.5" ry="1.5" fill="#e07080"/>
  <ellipse cx="32" cy="31" rx="4.5" ry="1.6" fill="#e07080"/>
</symbol>
<use href="#kidneys" x="8" y="46" width="101" height="67"/>
<use href="#heart" x="233.3" y="5.3" width="28.7" height="48"/>
<use href="#liver" x="302.8" y="46.2" width="62.2" height="49.6"/>
<use href="#hand" x="465.3" y="74.5" width="28.1" height="59.3"/>
<use href="#neck" x="649.1" y="47.5" width="65.3" height="46.1"/>
<use href="#kidneys" x="8" y="291.3" width="51.2" height="34.2"/>
<use href="#heart" x="197.9" y="329.8" width="30.7" height="50"/>
<use href="#heart" x="330" y="248.8" width="37.9" height="58.6"/>
<use href="#lungs" x="385.5" y="258" width="54" height="46.8"/>
<use href="#face" x="625.1" y="338.3" width="63.9" height="55.9"/>

<g font-family="Liberation Sans" font-size="11.1" style="stroke-width:var(--ts,0.28)">
<text transform="translate(14,128.6) scale(1.085,1)" fill="#404040" stroke="#404040"><tspan fill="#e3414f" stroke="#e3414f" style="stroke-width:var(--ts2,0.15)">1966</tspan> - <tspan class="ul" id="u1">pierwszy</tspan></text>
<text transform="translate(14,145.07) scale(1.085,1)" fill="#404040" stroke="#404040"><tspan class="ul" id="u2">przeszczep nerki od</tspan></text>
<text transform="translate(14,161.54) scale(1.085,1)" fill="#404040" stroke="#404040"><tspan class="ul" id="u3">zmarłego dawcy</tspan></text>
<text transform="translate(14,178.01) scale(1.085,1)" fill="#404040" stroke="#404040">(Warszawa)</text>
<circle cx="139.2" cy="13.600000000000001" r="2.6" fill="#e2323e"/>
<text transform="translate(143.1,17.8) scale(1.085,1)" fill="#404040" stroke="#404040"><tspan fill="#e3414f" stroke="#e3414f" style="stroke-width:var(--ts2,0.15)">1969</tspan> - <tspan class="ul" id="u4">pierwsza</tspan></text>
<text transform="translate(136.5,34.40) scale(1.085,1)" fill="#404040" stroke="#404040"><tspan class="ul" id="u5">nieudana próba</tspan></text>
<text transform="translate(136.5,51.00) scale(1.085,1)" fill="#404040" stroke="#404040"><tspan class="ul" id="u6">przeszczepienia</tspan></text>
<text transform="translate(136.5,67.60) scale(1.085,1)" fill="#404040" stroke="#404040"><tspan class="ul" id="u7">serca</tspan> <tspan class="ul" id="u8">(Łódź)</tspan></text>
<circle cx="264.3" cy="105.55" r="2.6" fill="#e2323e"/>
<text transform="translate(268.20000000000005,109.75) scale(1.085,1)" fill="#404040" stroke="#404040"><tspan fill="#e3414f" stroke="#e3414f" style="stroke-width:var(--ts2,0.15)">1994</tspan> - <tspan class="ul" id="u9">pierwsze</tspan></text>
<text transform="translate(261.6,126.15) scale(1.085,1)" fill="#404040" stroke="#404040"><tspan class="ul" id="u10">przeszczepienie</tspan></text>
<text transform="translate(261.6,142.55) scale(1.085,1)" fill="#404040" stroke="#404040"><tspan class="ul" id="u11">wątroby</tspan></text>
<text transform="translate(261.6,158.95) scale(1.085,1)" fill="#404040" stroke="#404040">(Warszawa)</text>
<text transform="translate(422.8,30.3) scale(1.085,1)" fill="#404040" stroke="#404040"><tspan fill="#e3414f" stroke="#e3414f" style="stroke-width:var(--ts2,0.15)">2006</tspan> - <tspan class="ul" id="u12">pierwsze</tspan></text>
<text transform="translate(422.8,46.45) scale(1.085,1)" fill="#404040" stroke="#404040"><tspan class="ul" id="u13">przeszczepienie</tspan></text>
<text transform="translate(422.8,62.60) scale(1.085,1)" fill="#404040" stroke="#404040"><tspan class="ul" id="u14">ręki</tspan> (<tspan class="ul" id="u15">Trzebnica</tspan>)</text>
<text transform="translate(572.3,102.9) scale(1.085,1)" fill="#404040" stroke="#404040"><tspan fill="#e3414f" stroke="#e3414f" style="stroke-width:var(--ts2,0.15)">2015</tspan> - <tspan class="ul" id="u16">pierwszy na</tspan></text>
<text transform="translate(572.3,119.80) scale(1.085,1)" fill="#404040" stroke="#404040"><tspan class="ul" id="u17">świecie złożony</tspan></text>
<text transform="translate(572.3,136.70) scale(1.085,1)" fill="#404040" stroke="#404040"><tspan class="ul" id="u18">przeszczep narządów</tspan></text>
<text transform="translate(572.3,153.60) scale(1.085,1)" fill="#404040" stroke="#404040"><tspan class="ul" id="u19">szyi</tspan> (Gliwice)</text>
<circle cx="17.3" cy="336.8" r="2.6" fill="#e2323e"/>
<text transform="translate(21.2,341) scale(1.085,1)" fill="#404040" stroke="#404040"><tspan fill="#e3414f" stroke="#e3414f" style="stroke-width:var(--ts2,0.15)">1968</tspan> - <tspan class="ul" id="u20">pierwszy</tspan></text>
<text transform="translate(14.6,357.50) scale(1.085,1)" fill="#404040" stroke="#404040"><tspan class="ul" id="u21">przeszczep nerki od</tspan></text>
<text transform="translate(14.6,374.00) scale(1.085,1)" fill="#404040" stroke="#404040"><tspan class="ul" id="u22">żywego dawcy</tspan></text>
<text transform="translate(14.6,390.50) scale(1.085,1)" fill="#404040" stroke="#404040">(<tspan class="ul" id="u23">Wrocław</tspan>)</text>
<circle cx="165.7" cy="276.8" r="2.6" fill="#e2323e"/>
<text transform="translate(169.6,281) scale(1.085,1)" fill="#404040" stroke="#404040"><tspan fill="#e3414f" stroke="#e3414f" style="stroke-width:var(--ts2,0.15)">1985</tspan> - <tspan class="ul" id="u24">pierwsze</tspan></text>
<text transform="translate(163,297.40) scale(1.085,1)" fill="#404040" stroke="#404040"><tspan class="ul" id="u25">przeszczepienie</tspan></text>
<text transform="translate(163,313.80) scale(1.085,1)" fill="#404040" stroke="#404040"><tspan class="ul" id="u26">serca</tspan> (Zabrze)</text>
<text transform="translate(355.8,332.3) scale(1.085,1)" fill="#404040" stroke="#404040"><tspan fill="#e3414f" stroke="#e3414f" style="stroke-width:var(--ts2,0.15)">2001</tspan> - <tspan class="ul" id="u27">pierwsze</tspan></text>
<text transform="translate(355.8,348.57) scale(1.085,1)" fill="#404040" stroke="#404040"><tspan class="ul" id="u28">przeszczepienie</tspan></text>
<text transform="translate(355.8,364.84) scale(1.085,1)" fill="#404040" stroke="#404040"><tspan class="ul" id="u29">płuc i serca</tspan></text>
<text transform="translate(355.8,381.11) scale(1.085,1)" fill="#404040" stroke="#404040">(Zabrze)</text>
<text transform="translate(525.4,336.6) scale(1.085,1)" fill="#404040" stroke="#404040"><tspan fill="#e3414f" stroke="#e3414f" style="stroke-width:var(--ts2,0.15)">2013</tspan> - <tspan class="ul" id="u30">pierwsze</tspan></text>
<text transform="translate(525.4,353.10) scale(1.085,1)" fill="#404040" stroke="#404040"><tspan class="ul" id="u31">całkowite</tspan></text>
<text transform="translate(525.4,369.60) scale(1.085,1)" fill="#404040" stroke="#404040"><tspan class="ul" id="u32">przeszczepienie</tspan></text>
<text transform="translate(525.4,386.10) scale(1.085,1)" fill="#404040" stroke="#404040"><tspan class="ul" id="u33">twarzy</tspan> (Gliwice)</text>
</g>
<path d="M51.5,130.4 L53.0,131.3 L54.5,130.4 L56.0,131.3 L57.5,130.4 L59.0,131.3 L60.5,130.4 L62.0,131.3 L63.5,130.4 L65.0,131.3 L66.5,130.4 L68.0,131.3 L69.5,130.4 L71.0,131.3 L72.5,130.4 L74.0,131.3 L75.5,130.4 L77.0,131.3 L78.5,130.4 L80.0,131.3 L81.5,130.4 L83.0,131.3 L84.5,130.4 L86.0,131.3 L87.5,130.4 L89.0,131.3 L90.5,130.4 L92.0,131.3 L93.5,130.4 L95.0,131.3 L96.5,130.4 L98.0,131.3 M14.0,146.8 L15.5,147.7 L17.0,146.8 L18.5,147.7 L20.0,146.8 L21.5,147.7 L23.0,146.8 L24.5,147.7 L26.0,146.8 L27.5,147.7 L29.0,146.8 L30.5,147.7 L32.0,146.8 L33.5,147.7 L35.0,146.8 L36.5,147.7 L38.0,146.8 L39.5,147.7 L41.0,146.8 L42.5,147.7 L44.0,146.8 L45.5,147.7 L47.0,146.8 L48.5,147.7 L50.0,146.8 L51.5,147.7 L53.0,146.8 L54.5,147.7 L56.0,146.8 L57.5,147.7 L59.0,146.8 L60.5,147.7 L62.0,146.8 L63.5,147.7 L65.0,146.8 L66.5,147.7 L68.0,146.8 L69.5,147.7 L71.0,146.8 L72.5,147.7 L74.0,146.8 L75.5,147.7 L77.0,146.8 L78.5,147.7 L80.0,146.8 L81.5,147.7 L83.0,146.8 L84.5,147.7 L86.0,146.8 L87.5,147.7 L89.0,146.8 L90.5,147.7 L92.0,146.8 L93.5,147.7 L95.0,146.8 L96.5,147.7 L98.0,146.8 L99.5,147.7 L101.0,146.8 L102.5,147.7 L104.0,146.8 L105.5,147.7 L107.0,146.8 L108.5,147.7 L110.0,146.8 L111.5,147.7 L113.0,146.8 L114.5,147.7 L116.0,146.8 L117.5,147.7 L119.0,146.8 L120.5,147.7 M14.0,163.3 L15.5,164.2 L17.0,163.3 L18.5,164.2 L20.0,163.3 L21.5,164.2 L23.0,163.3 L24.5,164.2 L26.0,163.3 L27.5,164.2 L29.0,163.3 L30.5,164.2 L32.0,163.3 L33.5,164.2 L35.0,163.3 L36.5,164.2 L38.0,163.3 L39.5,164.2 L41.0,163.3 L42.5,164.2 L44.0,163.3 L45.5,164.2 L47.0,163.3 L48.5,164.2 L50.0,163.3 L51.5,164.2 L53.0,163.3 L54.5,164.2 L56.0,163.3 L57.5,164.2 L59.0,163.3 L60.5,164.2 L62.0,163.3 L63.5,164.2 L65.0,163.3 L66.5,164.2 L68.0,163.3 L69.5,164.2 L71.0,163.3 L72.5,164.2 L74.0,163.3 L75.5,164.2 L77.0,163.3 L78.5,164.2 L80.0,163.3 L81.5,164.2 L83.0,163.3 L84.5,164.2 L86.0,163.3 L87.5,164.2 L89.0,163.3 L90.5,164.2 L92.0,163.3 L93.5,164.2 L95.0,163.3 L96.5,164.2 L98.0,163.3 L99.5,164.2 M180.6,19.5 L182.1,20.4 L183.6,19.5 L185.1,20.4 L186.6,19.5 L188.1,20.4 L189.6,19.5 L191.1,20.4 L192.6,19.5 L194.1,20.4 L195.6,19.5 L197.1,20.4 L198.6,19.5 L200.1,20.4 L201.6,19.5 L203.1,20.4 L204.6,19.5 L206.1,20.4 L207.6,19.5 L209.1,20.4 L210.6,19.5 L212.1,20.4 L213.6,19.5 L215.1,20.4 L216.6,19.5 L218.1,20.4 L219.6,19.5 L221.1,20.4 L222.6,19.5 L224.1,20.4 L225.6,19.5 L227.1,20.4 M136.5,36.2 L138.0,37.1 L139.5,36.2 L141.0,37.1 L142.5,36.2 L144.0,37.1 L145.5,36.2 L147.0,37.1 L148.5,36.2 L150.0,37.1 L151.5,36.2 L153.0,37.1 L154.5,36.2 L156.0,37.1 L157.5,36.2 L159.0,37.1 L160.5,36.2 L162.0,37.1 L163.5,36.2 L165.0,37.1 L166.5,36.2 L168.0,37.1 L169.5,36.2 L171.0,37.1 L172.5,36.2 L174.0,37.1 L175.5,36.2 L177.0,37.1 L178.5,36.2 L180.0,37.1 L181.5,36.2 L183.0,37.1 L184.5,36.2 L186.0,37.1 L187.5,36.2 L189.0,37.1 L190.5,36.2 L192.0,37.1 L193.5,36.2 L195.0,37.1 L196.5,36.2 L198.0,37.1 L199.5,36.2 L201.0,37.1 L202.5,36.2 L204.0,37.1 L205.5,36.2 L207.0,37.1 L208.5,36.2 L210.0,37.1 L211.5,36.2 L213.0,37.1 L214.5,36.2 L216.0,37.1 L217.5,36.2 L219.0,37.1 M136.5,52.8 L138.0,53.7 L139.5,52.8 L141.0,53.7 L142.5,52.8 L144.0,53.7 L145.5,52.8 L147.0,53.7 L148.5,52.8 L150.0,53.7 L151.5,52.8 L153.0,53.7 L154.5,52.8 L156.0,53.7 L157.5,52.8 L159.0,53.7 L160.5,52.8 L162.0,53.7 L163.5,52.8 L165.0,53.7 L166.5,52.8 L168.0,53.7 L169.5,52.8 L171.0,53.7 L172.5,52.8 L174.0,53.7 L175.5,52.8 L177.0,53.7 L178.5,52.8 L180.0,53.7 L181.5,52.8 L183.0,53.7 L184.5,52.8 L186.0,53.7 L187.5,52.8 L189.0,53.7 L190.5,52.8 L192.0,53.7 L193.5,52.8 L195.0,53.7 L196.5,52.8 L198.0,53.7 L199.5,52.8 L201.0,53.7 L202.5,52.8 L204.0,53.7 L205.5,52.8 L207.0,53.7 L208.5,52.8 L210.0,53.7 L211.5,52.8 L213.0,53.7 L214.5,52.8 L216.0,53.7 L217.5,52.8 L219.0,53.7 L220.5,52.8 L222.0,53.7 M136.5,69.3 L138.0,70.2 L139.5,69.3 L141.0,70.2 L142.5,69.3 L144.0,70.2 L145.5,69.3 L147.0,70.2 L148.5,69.3 L150.0,70.2 L151.5,69.3 L153.0,70.2 L154.5,69.3 L156.0,70.2 L157.5,69.3 L159.0,70.2 L160.5,69.3 L162.0,70.2 L163.5,69.3 L165.0,70.2 M169.3,69.3 L170.8,70.2 L172.3,69.3 L173.8,70.2 L175.3,69.3 L176.8,70.2 L178.3,69.3 L179.8,70.2 L181.3,69.3 L182.8,70.2 L184.3,69.3 L185.8,70.2 L187.3,69.3 L188.8,70.2 L190.3,69.3 L191.8,70.2 L193.3,69.3 L194.8,70.2 L196.3,69.3 L197.8,70.2 L199.3,69.3 L200.8,70.2 L202.3,69.3 M305.7,111.5 L307.2,112.4 L308.7,111.5 L310.2,112.4 L311.7,111.5 L313.2,112.4 L314.7,111.5 L316.2,112.4 L317.7,111.5 L319.2,112.4 L320.7,111.5 L322.2,112.4 L323.7,111.5 L325.2,112.4 L326.7,111.5 L328.2,112.4 L329.7,111.5 L331.2,112.4 L332.7,111.5 L334.2,112.4 L335.7,111.5 L337.2,112.4 L338.7,111.5 L340.2,112.4 L341.7,111.5 L343.2,112.4 L344.7,111.5 L346.2,112.4 L347.7,111.5 L349.2,112.4 L350.7,111.5 L352.2,112.4 M261.6,127.9 L263.1,128.8 L264.6,127.9 L266.1,128.8 L267.6,127.9 L269.1,128.8 L270.6,127.9 L272.1,128.8 L273.6,127.9 L275.1,128.8 L276.6,127.9 L278.1,128.8 L279.6,127.9 L281.1,128.8 L282.6,127.9 L284.1,128.8 L285.6,127.9 L287.1,128.8 L288.6,127.9 L290.1,128.8 L291.6,127.9 L293.1,128.8 L294.6,127.9 L296.1,128.8 L297.6,127.9 L299.1,128.8 L300.6,127.9 L302.1,128.8 L303.6,127.9 L305.1,128.8 L306.6,127.9 L308.1,128.8 L309.6,127.9 L311.1,128.8 L312.6,127.9 L314.1,128.8 L315.6,127.9 L317.1,128.8 L318.6,127.9 L320.1,128.8 L321.6,127.9 L323.1,128.8 L324.6,127.9 L326.1,128.8 L327.6,127.9 L329.1,128.8 L330.6,127.9 L332.1,128.8 L333.6,127.9 L335.1,128.8 L336.6,127.9 L338.1,128.8 L339.6,127.9 L341.1,128.8 L342.6,127.9 L344.1,128.8 L345.6,127.9 L347.1,128.8 M261.6,144.3 L263.1,145.2 L264.6,144.3 L266.1,145.2 L267.6,144.3 L269.1,145.2 L270.6,144.3 L272.1,145.2 L273.6,144.3 L275.1,145.2 L276.6,144.3 L278.1,145.2 L279.6,144.3 L281.1,145.2 L282.6,144.3 L284.1,145.2 L285.6,144.3 L287.1,145.2 L288.6,144.3 L290.1,145.2 L291.6,144.3 L293.1,145.2 L294.6,144.3 L296.1,145.2 L297.6,144.3 L299.1,145.2 L300.6,144.3 L302.1,145.2 L303.6,144.3 M460.3,32.0 L461.8,32.9 L463.3,32.0 L464.8,32.9 L466.3,32.0 L467.8,32.9 L469.3,32.0 L470.8,32.9 L472.3,32.0 L473.8,32.9 L475.3,32.0 L476.8,32.9 L478.3,32.0 L479.8,32.9 L481.3,32.0 L482.8,32.9 L484.3,32.0 L485.8,32.9 L487.3,32.0 L488.8,32.9 L490.3,32.0 L491.8,32.9 L493.3,32.0 L494.8,32.9 L496.3,32.0 L497.8,32.9 L499.3,32.0 L500.8,32.9 L502.3,32.0 L503.8,32.9 L505.3,32.0 L506.8,32.9 M422.8,48.2 L424.3,49.1 L425.8,48.2 L427.3,49.1 L428.8,48.2 L430.3,49.1 L431.8,48.2 L433.3,49.1 L434.8,48.2 L436.3,49.1 L437.8,48.2 L439.3,49.1 L440.8,48.2 L442.3,49.1 L443.8,48.2 L445.3,49.1 L446.8,48.2 L448.3,49.1 L449.8,48.2 L451.3,49.1 L452.8,48.2 L454.3,49.1 L455.8,48.2 L457.3,49.1 L458.8,48.2 L460.3,49.1 L461.8,48.2 L463.3,49.1 L464.8,48.2 L466.3,49.1 L467.8,48.2 L469.3,49.1 L470.8,48.2 L472.3,49.1 L473.8,48.2 L475.3,49.1 L476.8,48.2 L478.3,49.1 L479.8,48.2 L481.3,49.1 L482.8,48.2 L484.3,49.1 L485.8,48.2 L487.3,49.1 L488.8,48.2 L490.3,49.1 L491.8,48.2 L493.3,49.1 L494.8,48.2 L496.3,49.1 L497.8,48.2 L499.3,49.1 L500.8,48.2 L502.3,49.1 L503.8,48.2 L505.3,49.1 L506.8,48.2 L508.3,49.1 M422.8,64.3 L424.3,65.2 L425.8,64.3 L427.3,65.2 L428.8,64.3 L430.3,65.2 L431.8,64.3 L433.3,65.2 L434.8,64.3 L436.3,65.2 L437.8,64.3 L439.3,65.2 L440.8,64.3 M449.6,64.3 L451.1,65.2 L452.6,64.3 L454.1,65.2 L455.6,64.3 L457.1,65.2 L458.6,64.3 L460.1,65.2 L461.6,64.3 L463.1,65.2 L464.6,64.3 L466.1,65.2 L467.6,64.3 L469.1,65.2 L470.6,64.3 L472.1,65.2 L473.6,64.3 L475.1,65.2 L476.6,64.3 L478.1,65.2 L479.6,64.3 L481.1,65.2 L482.6,64.3 L484.1,65.2 L485.6,64.3 L487.1,65.2 L488.6,64.3 L490.1,65.2 L491.6,64.3 L493.1,65.2 L494.6,64.3 L496.1,65.2 L497.6,64.3 L499.1,65.2 L500.6,64.3 M609.8,104.7 L611.3,105.6 L612.8,104.7 L614.3,105.6 L615.8,104.7 L617.3,105.6 L618.8,104.7 L620.3,105.6 L621.8,104.7 L623.3,105.6 L624.8,104.7 L626.3,105.6 L627.8,104.7 L629.3,105.6 L630.8,104.7 L632.3,105.6 L633.8,104.7 L635.3,105.6 L636.8,104.7 L638.3,105.6 L639.8,104.7 L641.3,105.6 L642.8,104.7 L644.3,105.6 L645.8,104.7 L647.3,105.6 L648.8,104.7 L650.3,105.6 L651.8,104.7 L653.3,105.6 L654.8,104.7 L656.3,105.6 L657.8,104.7 L659.3,105.6 L660.8,104.7 L662.3,105.6 L663.8,104.7 L665.3,105.6 L666.8,104.7 L668.3,105.6 L669.8,104.7 L671.3,105.6 L672.8,104.7 M572.3,121.6 L573.8,122.5 L575.3,121.6 L576.8,122.5 L578.3,121.6 L579.8,122.5 L581.3,121.6 L582.8,122.5 L584.3,121.6 L585.8,122.5 L587.3,121.6 L588.8,122.5 L590.3,121.6 L591.8,122.5 L593.3,121.6 L594.8,122.5 L596.3,121.6 L597.8,122.5 L599.3,121.6 L600.8,122.5 L602.3,121.6 L603.8,122.5 L605.3,121.6 L606.8,122.5 L608.3,121.6 L609.8,122.5 L611.3,121.6 L612.8,122.5 L614.3,121.6 L615.8,122.5 L617.3,121.6 L618.8,122.5 L620.3,121.6 L621.8,122.5 L623.3,121.6 L624.8,122.5 L626.3,121.6 L627.8,122.5 L629.3,121.6 L630.8,122.5 L632.3,121.6 L633.8,122.5 L635.3,121.6 L636.8,122.5 L638.3,121.6 L639.8,122.5 L641.3,121.6 L642.8,122.5 L644.3,121.6 L645.8,122.5 L647.3,121.6 L648.8,122.5 L650.3,121.6 L651.8,122.5 L653.3,121.6 L654.8,122.5 M572.3,138.4 L573.8,139.3 L575.3,138.4 L576.8,139.3 L578.3,138.4 L579.8,139.3 L581.3,138.4 L582.8,139.3 L584.3,138.4 L585.8,139.3 L587.3,138.4 L588.8,139.3 L590.3,138.4 L591.8,139.3 L593.3,138.4 L594.8,139.3 L596.3,138.4 L597.8,139.3 L599.3,138.4 L600.8,139.3 L602.3,138.4 L603.8,139.3 L605.3,138.4 L606.8,139.3 L608.3,138.4 L609.8,139.3 L611.3,138.4 L612.8,139.3 L614.3,138.4 L615.8,139.3 L617.3,138.4 L618.8,139.3 L620.3,138.4 L621.8,139.3 L623.3,138.4 L624.8,139.3 L626.3,138.4 L627.8,139.3 L629.3,138.4 L630.8,139.3 L632.3,138.4 L633.8,139.3 L635.3,138.4 L636.8,139.3 L638.3,138.4 L639.8,139.3 L641.3,138.4 L642.8,139.3 L644.3,138.4 L645.8,139.3 L647.3,138.4 L648.8,139.3 L650.3,138.4 L651.8,139.3 L653.3,138.4 L654.8,139.3 L656.3,138.4 L657.8,139.3 L659.3,138.4 L660.8,139.3 L662.3,138.4 L663.8,139.3 L665.3,138.4 L666.8,139.3 L668.3,138.4 L669.8,139.3 L671.3,138.4 L672.8,139.3 L674.3,138.4 L675.8,139.3 L677.3,138.4 L678.8,139.3 L680.3,138.4 L681.8,139.3 L683.3,138.4 L684.8,139.3 L686.3,138.4 L687.8,139.3 M572.3,155.4 L573.8,156.3 L575.3,155.4 L576.8,156.3 L578.3,155.4 L579.8,156.3 L581.3,155.4 L582.8,156.3 L584.3,155.4 L585.8,156.3 L587.3,155.4 L588.8,156.3 L590.3,155.4 L591.8,156.3 M58.7,342.8 L60.2,343.6 L61.7,342.8 L63.2,343.6 L64.7,342.8 L66.2,343.6 L67.7,342.8 L69.2,343.6 L70.7,342.8 L72.2,343.6 L73.7,342.8 L75.2,343.6 L76.7,342.8 L78.2,343.6 L79.7,342.8 L81.2,343.6 L82.7,342.8 L84.2,343.6 L85.7,342.8 L87.2,343.6 L88.7,342.8 L90.2,343.6 L91.7,342.8 L93.2,343.6 L94.7,342.8 L96.2,343.6 L97.7,342.8 L99.2,343.6 L100.7,342.8 L102.2,343.6 L103.7,342.8 L105.2,343.6 M14.6,359.2 L16.1,360.1 L17.6,359.2 L19.1,360.1 L20.6,359.2 L22.1,360.1 L23.6,359.2 L25.1,360.1 L26.6,359.2 L28.1,360.1 L29.6,359.2 L31.1,360.1 L32.6,359.2 L34.1,360.1 L35.6,359.2 L37.1,360.1 L38.6,359.2 L40.1,360.1 L41.6,359.2 L43.1,360.1 L44.6,359.2 L46.1,360.1 L47.6,359.2 L49.1,360.1 L50.6,359.2 L52.1,360.1 L53.6,359.2 L55.1,360.1 L56.6,359.2 L58.1,360.1 L59.6,359.2 L61.1,360.1 L62.6,359.2 L64.1,360.1 L65.6,359.2 L67.1,360.1 L68.6,359.2 L70.1,360.1 L71.6,359.2 L73.1,360.1 L74.6,359.2 L76.1,360.1 L77.6,359.2 L79.1,360.1 L80.6,359.2 L82.1,360.1 L83.6,359.2 L85.1,360.1 L86.6,359.2 L88.1,360.1 L89.6,359.2 L91.1,360.1 L92.6,359.2 L94.1,360.1 L95.6,359.2 L97.1,360.1 L98.6,359.2 L100.1,360.1 L101.6,359.2 L103.1,360.1 L104.6,359.2 L106.1,360.1 L107.6,359.2 L109.1,360.1 L110.6,359.2 L112.1,360.1 L113.6,359.2 L115.1,360.1 L116.6,359.2 L118.1,360.1 L119.6,359.2 L121.1,360.1 M14.6,375.8 L16.1,376.6 L17.6,375.8 L19.1,376.6 L20.6,375.8 L22.1,376.6 L23.6,375.8 L25.1,376.6 L26.6,375.8 L28.1,376.6 L29.6,375.8 L31.1,376.6 L32.6,375.8 L34.1,376.6 L35.6,375.8 L37.1,376.6 L38.6,375.8 L40.1,376.6 L41.6,375.8 L43.1,376.6 L44.6,375.8 L46.1,376.6 L47.6,375.8 L49.1,376.6 L50.6,375.8 L52.1,376.6 L53.6,375.8 L55.1,376.6 L56.6,375.8 L58.1,376.6 L59.6,375.8 L61.1,376.6 L62.6,375.8 L64.1,376.6 L65.6,375.8 L67.1,376.6 L68.6,375.8 L70.1,376.6 L71.6,375.8 L73.1,376.6 L74.6,375.8 L76.1,376.6 L77.6,375.8 L79.1,376.6 L80.6,375.8 L82.1,376.6 L83.6,375.8 L85.1,376.6 L86.6,375.8 L88.1,376.6 L89.6,375.8 L91.1,376.6 L92.6,375.8 M18.6,392.2 L20.1,393.1 L21.6,392.2 L23.1,393.1 L24.6,392.2 L26.1,393.1 L27.6,392.2 L29.1,393.1 L30.6,392.2 L32.1,393.1 L33.6,392.2 L35.1,393.1 L36.6,392.2 L38.1,393.1 L39.6,392.2 L41.1,393.1 L42.6,392.2 L44.1,393.1 L45.6,392.2 L47.1,393.1 L48.6,392.2 L50.1,393.1 L51.6,392.2 L53.1,393.1 L54.6,392.2 L56.1,393.1 L57.6,392.2 L59.1,393.1 L60.6,392.2 L62.1,393.1 L63.6,392.2 M207.1,282.8 L208.6,283.6 L210.1,282.8 L211.6,283.6 L213.1,282.8 L214.6,283.6 L216.1,282.8 L217.6,283.6 L219.1,282.8 L220.6,283.6 L222.1,282.8 L223.6,283.6 L225.1,282.8 L226.6,283.6 L228.1,282.8 L229.6,283.6 L231.1,282.8 L232.6,283.6 L234.1,282.8 L235.6,283.6 L237.1,282.8 L238.6,283.6 L240.1,282.8 L241.6,283.6 L243.1,282.8 L244.6,283.6 L246.1,282.8 L247.6,283.6 L249.1,282.8 L250.6,283.6 L252.1,282.8 L253.6,283.6 M163.0,299.1 L164.5,300.0 L166.0,299.1 L167.5,300.0 L169.0,299.1 L170.5,300.0 L172.0,299.1 L173.5,300.0 L175.0,299.1 L176.5,300.0 L178.0,299.1 L179.5,300.0 L181.0,299.1 L182.5,300.0 L184.0,299.1 L185.5,300.0 L187.0,299.1 L188.5,300.0 L190.0,299.1 L191.5,300.0 L193.0,299.1 L194.5,300.0 L196.0,299.1 L197.5,300.0 L199.0,299.1 L200.5,300.0 L202.0,299.1 L203.5,300.0 L205.0,299.1 L206.5,300.0 L208.0,299.1 L209.5,300.0 L211.0,299.1 L212.5,300.0 L214.0,299.1 L215.5,300.0 L217.0,299.1 L218.5,300.0 L220.0,299.1 L221.5,300.0 L223.0,299.1 L224.5,300.0 L226.0,299.1 L227.5,300.0 L229.0,299.1 L230.5,300.0 L232.0,299.1 L233.5,300.0 L235.0,299.1 L236.5,300.0 L238.0,299.1 L239.5,300.0 L241.0,299.1 L242.5,300.0 L244.0,299.1 L245.5,300.0 L247.0,299.1 L248.5,300.0 M163.0,315.5 L164.5,316.4 L166.0,315.5 L167.5,316.4 L169.0,315.5 L170.5,316.4 L172.0,315.5 L173.5,316.4 L175.0,315.5 L176.5,316.4 L178.0,315.5 L179.5,316.4 L181.0,315.5 L182.5,316.4 L184.0,315.5 L185.5,316.4 L187.0,315.5 L188.5,316.4 L190.0,315.5 L191.5,316.4 M393.3,334.0 L394.8,334.9 L396.3,334.0 L397.8,334.9 L399.3,334.0 L400.8,334.9 L402.3,334.0 L403.8,334.9 L405.3,334.0 L406.8,334.9 L408.3,334.0 L409.8,334.9 L411.3,334.0 L412.8,334.9 L414.3,334.0 L415.8,334.9 L417.3,334.0 L418.8,334.9 L420.3,334.0 L421.8,334.9 L423.3,334.0 L424.8,334.9 L426.3,334.0 L427.8,334.9 L429.3,334.0 L430.8,334.9 L432.3,334.0 L433.8,334.9 L435.3,334.0 L436.8,334.9 L438.3,334.0 L439.8,334.9 M355.8,350.3 L357.3,351.2 L358.8,350.3 L360.3,351.2 L361.8,350.3 L363.3,351.2 L364.8,350.3 L366.3,351.2 L367.8,350.3 L369.3,351.2 L370.8,350.3 L372.3,351.2 L373.8,350.3 L375.3,351.2 L376.8,350.3 L378.3,351.2 L379.8,350.3 L381.3,351.2 L382.8,350.3 L384.3,351.2 L385.8,350.3 L387.3,351.2 L388.8,350.3 L390.3,351.2 L391.8,350.3 L393.3,351.2 L394.8,350.3 L396.3,351.2 L397.8,350.3 L399.3,351.2 L400.8,350.3 L402.3,351.2 L403.8,350.3 L405.3,351.2 L406.8,350.3 L408.3,351.2 L409.8,350.3 L411.3,351.2 L412.8,350.3 L414.3,351.2 L415.8,350.3 L417.3,351.2 L418.8,350.3 L420.3,351.2 L421.8,350.3 L423.3,351.2 L424.8,350.3 L426.3,351.2 L427.8,350.3 L429.3,351.2 L430.8,350.3 L432.3,351.2 L433.8,350.3 L435.3,351.2 L436.8,350.3 L438.3,351.2 L439.8,350.3 L441.3,351.2 M355.8,366.6 L357.3,367.5 L358.8,366.6 L360.3,367.5 L361.8,366.6 L363.3,367.5 L364.8,366.6 L366.3,367.5 L367.8,366.6 L369.3,367.5 L370.8,366.6 L372.3,367.5 L373.8,366.6 L375.3,367.5 L376.8,366.6 L378.3,367.5 L379.8,366.6 L381.3,367.5 L382.8,366.6 L384.3,367.5 L385.8,366.6 L387.3,367.5 L388.8,366.6 L390.3,367.5 L391.8,366.6 L393.3,367.5 L394.8,366.6 L396.3,367.5 L397.8,366.6 L399.3,367.5 L400.8,366.6 L402.3,367.5 L403.8,366.6 L405.3,367.5 L406.8,366.6 L408.3,367.5 L409.8,366.6 L411.3,367.5 L412.8,366.6 L414.3,367.5 L415.8,366.6 M562.9,338.4 L564.4,339.3 L565.9,338.4 L567.4,339.3 L568.9,338.4 L570.4,339.3 L571.9,338.4 L573.4,339.3 L574.9,338.4 L576.4,339.3 L577.9,338.4 L579.4,339.3 L580.9,338.4 L582.4,339.3 L583.9,338.4 L585.4,339.3 L586.9,338.4 L588.4,339.3 L589.9,338.4 L591.4,339.3 L592.9,338.4 L594.4,339.3 L595.9,338.4 L597.4,339.3 L598.9,338.4 L600.4,339.3 L601.9,338.4 L603.4,339.3 L604.9,338.4 L606.4,339.3 L607.9,338.4 L609.4,339.3 M525.4,354.9 L526.9,355.8 L528.4,354.9 L529.9,355.8 L531.4,354.9 L532.9,355.8 L534.4,354.9 L535.9,355.8 L537.4,354.9 L538.9,355.8 L540.4,354.9 L541.9,355.8 L543.4,354.9 L544.9,355.8 L546.4,354.9 L547.9,355.8 L549.4,354.9 L550.9,355.8 L552.4,354.9 L553.9,355.8 L555.4,354.9 L556.9,355.8 L558.4,354.9 L559.9,355.8 L561.4,354.9 L562.9,355.8 L564.4,354.9 L565.9,355.8 L567.4,354.9 L568.9,355.8 L570.4,354.9 L571.9,355.8 L573.4,354.9 L574.9,355.8 M525.4,371.4 L526.9,372.3 L528.4,371.4 L529.9,372.3 L531.4,371.4 L532.9,372.3 L534.4,371.4 L535.9,372.3 L537.4,371.4 L538.9,372.3 L540.4,371.4 L541.9,372.3 L543.4,371.4 L544.9,372.3 L546.4,371.4 L547.9,372.3 L549.4,371.4 L550.9,372.3 L552.4,371.4 L553.9,372.3 L555.4,371.4 L556.9,372.3 L558.4,371.4 L559.9,372.3 L561.4,371.4 L562.9,372.3 L564.4,371.4 L565.9,372.3 L567.4,371.4 L568.9,372.3 L570.4,371.4 L571.9,372.3 L573.4,371.4 L574.9,372.3 L576.4,371.4 L577.9,372.3 L579.4,371.4 L580.9,372.3 L582.4,371.4 L583.9,372.3 L585.4,371.4 L586.9,372.3 L588.4,371.4 L589.9,372.3 L591.4,371.4 L592.9,372.3 L594.4,371.4 L595.9,372.3 L597.4,371.4 L598.9,372.3 L600.4,371.4 L601.9,372.3 L603.4,371.4 L604.9,372.3 L606.4,371.4 L607.9,372.3 L609.4,371.4 L610.9,372.3 M525.4,387.9 L526.9,388.8 L528.4,387.9 L529.9,388.8 L531.4,387.9 L532.9,388.8 L534.4,387.9 L535.9,388.8 L537.4,387.9 L538.9,388.8 L540.4,387.9 L541.9,388.8 L543.4,387.9 L544.9,388.8 L546.4,387.9 L547.9,388.8 L549.4,387.9 L550.9,388.8 L552.4,387.9 L553.9,388.8 L555.4,387.9 L556.9,388.8 L558.4,387.9 L559.9,388.8 " fill="none" stroke="#e8868a" stroke-width="0.85"/>
<rect x="13" y="202" width="694" height="13" fill="#4472c4"/>
<polygon points="706,195.3 720,208.5 706,221.5" fill="#4472c4"/>
<circle cx="52.3" cy="208.3" r="11" style="fill:var(--cc,#f00)"/>
<circle cx="93.6" cy="208.3" r="11" style="fill:var(--cc,#f00)"/>
<circle cx="139.3" cy="208.3" r="11" style="fill:var(--cc,#f00)"/>
<circle cx="220" cy="208.3" r="11" style="fill:var(--cc,#f00)"/>
<circle cx="301.6" cy="208.3" r="11" style="fill:var(--cc,#f00)"/>
<circle cx="372.6" cy="208.3" r="11" style="fill:var(--cc,#f00)"/>
<circle cx="473.3" cy="208.3" r="11" style="fill:var(--cc,#f00)"/>
<circle cx="600.5" cy="208.3" r="11" style="fill:var(--cc,#f00)"/>
<circle cx="659.4" cy="208.3" r="11" style="fill:var(--cc,#f00)"/>
<path d="M47.4,180 C47,196 50,204 55,208" fill="none" stroke="#000" style="stroke-width:var(--lw,2.6)" stroke-linecap="round"/>
<path d="M98,208 C98,230 99,248 95,258 C90,268 82,276 76,290 C70,304 66,316 65,328" fill="none" stroke="#000" style="stroke-width:var(--lw,2.6)" stroke-linecap="round"/>
<path d="M162.8,76.4 C160,90 158,100 156,118 C153,140 148,160 146,172 C143,186 140,196 138.5,209" fill="none" stroke="#000" style="stroke-width:var(--lw,2.6)" stroke-linecap="round"/>
<path d="M220.4,206.8 C219,214 212,222 208,230 C206,236 206.3,245 206.6,253" fill="none" stroke="#000" style="stroke-width:var(--lw,2.6)" stroke-linecap="round"/>
<path d="M295.5,163.5 C298,172 302,182 304,195 C304.5,200 304.7,205 304.75,209" fill="none" stroke="#000" style="stroke-width:var(--lw,2.6)" stroke-linecap="round"/>
<path d="M370.8,210 C372,216 375,222 374.5,232 C373.5,246 372.5,262 372.8,280 C373,296 375,306 378,312" fill="none" stroke="#000" style="stroke-width:var(--lw,2.6)" stroke-linecap="round"/>
<path d="M446.7,69.3 C446,88 447,104 450,116 C454,130 460,140 464,154 C468,166 472,180 474,192 C475,200 476,206 476,211" fill="none" stroke="#000" style="stroke-width:var(--lw,2.6)" stroke-linecap="round"/>
<path d="M601,204.7 C596,212 589,218 585,228 C581,240 580,252 578.5,268 C577,282 575,296 570,304 C567,309 565,312 563.5,315" fill="none" stroke="#000" style="stroke-width:var(--lw,2.6)" stroke-linecap="round"/>
<path d="M639,160 C645,165 651,172 655,178 C659,186 661,192 662,198 C662.5,202 663,206 663,208.5" fill="none" stroke="#000" style="stroke-width:var(--lw,2.6)" stroke-linecap="round"/>
</g></defs><use href="#s7"/></svg>

<div id="status" class="a"></div>
<div class="a" style="left:0;top:534.5px;width:1024px;height:1px;background:#e0e0e0"></div>
<div class="t" style="left:5px;top:539px;font-size:6.8px;color:#666">Slajd 7 z 8</div>
<svg class="ic" style="left:740px;top:537px" width="11" height="10"><path d="M1,4 H10 M1,6.5 H10 M1,9 H10 M3.5,3 L5.5,1 L7.5,3" stroke="#666" stroke-width="0.9" fill="none"/></svg>
<div class="t" style="left:751px;top:539px;font-size:6.8px;color:#555">Notatki</div>
<div class="a" style="left:787px;top:535.5px;width:26px;height:13px;background:#d4d4d4"></div>
<svg class="ic" style="left:794px;top:537px" width="12" height="10"><rect x="1" y="1" width="10" height="8" fill="none" stroke="#555" stroke-width="1"/><path d="M3,3 H5 M3,5 H5 M3,7 H5 M6.5,3 H9.5 V7 H6.5Z" stroke="#555" stroke-width="0.8" fill="none"/></svg>
<svg class="ic" style="left:821px;top:537px" width="11" height="10"><rect x="1" y="1" width="3.5" height="3" fill="none" stroke="#666" stroke-width="0.9"/><rect x="6.5" y="1" width="3.5" height="3" fill="none" stroke="#666" stroke-width="0.9"/><rect x="1" y="6" width="3.5" height="3" fill="none" stroke="#666" stroke-width="0.9"/><rect x="6.5" y="6" width="3.5" height="3" fill="none" stroke="#666" stroke-width="0.9"/></svg>
<svg class="ic" style="left:847px;top:537px" width="12" height="10"><rect x="1" y="1" width="10" height="8" fill="none" stroke="#666" stroke-width="0.9"/><path d="M6,1 V9 M1,5 H11" stroke="#666" stroke-width="0.8"/></svg>
<svg class="ic" style="left:873px;top:536.5px" width="12" height="11"><path d="M1,1 H11 M2,1 V6 H10 V1 M6,6 V10 M4,10 H8" stroke="#666" stroke-width="0.9" fill="none"/></svg>
<div class="a" style="left:897px;top:541.5px;width:4px;height:1px;background:#777"></div>
<div class="a" style="left:905px;top:541.5px;width:70px;height:1px;background:#bbb"></div>
<div class="a" style="left:933px;top:538px;width:3px;height:8px;background:#666"></div>
<svg class="ic" style="left:975px;top:538px" width="7" height="7"><path d="M3.5,0.5 V6.5 M0.5,3.5 H6.5" stroke="#777" stroke-width="0.9"/></svg>
<div class="t" style="left:989px;top:539px;font-size:6.8px;color:#666">86%</div>
<svg class="ic" style="left:1008px;top:535.5px" width="14" height="13"><path d="M7,1 L7,12 M1.5,6.5 L12.5,6.5" stroke="#666" stroke-width="0.9"/><rect x="4" y="3.5" width="6" height="6" fill="none" stroke="#666" stroke-width="0.9"/></svg>


<div id="taskbar" class="a"></div>
<svg class="ic" style="left:10px;top:556px" width="13" height="13"><path d="M0.5,2 L5.5,1.2 V6 H0.5Z M6.5,1 L12.5,0 V6 H6.5Z M0.5,7 H5.5 V11.8 L0.5,11Z M6.5,7 H12.5 V13 L6.5,12Z" fill="#fff"/></svg>
<div class="a" style="left:32.5px;top:549.5px;width:228.5px;height:26.5px;background:#f0f0f0;border:1px solid #d0d0d0"></div>
<svg class="ic" style="left:40px;top:556px" width="12" height="12"><circle cx="7" cy="5" r="4" fill="none" stroke="#333" stroke-width="1.2"/><path d="M4.2,7.8 L1,11" stroke="#333" stroke-width="1.3"/></svg>
<div class="t" style="left:59px;top:557.5px;font-size:9.9px;color:#3a3a3a">Wpisz tu wyszukiwane słowa</div>
<svg class="ic" style="left:271px;top:557px" width="12" height="12"><circle cx="6" cy="6" r="4.4" fill="none" stroke="#fff" stroke-width="1.5"/></svg>
<svg class="ic" style="left:302px;top:556px" width="14" height="13"><rect x="2" y="3" width="8" height="7" fill="none" stroke="#e8e8e8" stroke-width="1.1"/><path d="M0.5,1 V12 M12,1 V4 M12,6 V8 M12,10 V12 M2,1 H10 M2,12 H10" stroke="#e8e8e8" stroke-width="1"/></svg>
<svg class="ic" style="left:335px;top:554px" width="17" height="15"><path d="M0.5,2 H6 L8,4 H16 V14 H0.5Z" fill="#f2c648"/><rect x="0.5" y="5.5" width="15.5" height="8.5" fill="#f8d868"/><rect x="4" y="8" width="9" height="3.5" fill="#2e78c8"/></svg>
<svg class="ic" style="left:368px;top:553px" width="17" height="18"><path d="M5,5 C5,1 12,1 12,5" fill="none" stroke="#e0e0e0" stroke-width="1.2"/><rect x="1" y="5" width="15" height="12" fill="#f4f4f4"/><rect x="5" y="8" width="3" height="3" fill="#f25022"/><rect x="9" y="8" width="3" height="3" fill="#7fba00"/><rect x="5" y="12" width="3" height="3" fill="#00a4ef"/><rect x="9" y="12" width="3" height="3" fill="#ffb900"/></svg>
<svg class="ic" style="left:401px;top:553px" width="18" height="18"><defs><linearGradient id="ge" x1="0" y1="0" x2="1" y2="1"><stop offset="0" stop-color="#39c67a"/><stop offset="0.5" stop-color="#1b9de2"/><stop offset="1" stop-color="#0c59a4"/></linearGradient></defs><circle cx="9" cy="9" r="8" fill="url(#ge)"/><path d="M6,10 C6,6 12,5 13,9 H7.5 C8,12 12,13 15,11.5 C13,16 5,16 6,10Z" fill="#22313a" opacity="0.85"/></svg>
<div class="a" style="left:396.5px;top:574px;width:27px;height:2px;background:#88b8e0"></div>
<svg class="ic" style="left:434px;top:555px" width="17" height="14"><rect x="0.5" y="1" width="16" height="12" fill="#1e8ed8"/><path d="M0.5,1 L8.5,8 L16.5,1" fill="#52b4f0"/></svg>
<div class="a" style="left:459.5px;top:549px;width:33px;height:27px;background:#8e5a36"></div>
<svg class="ic" style="left:467px;top:554px" width="18" height="17"><circle cx="13" cy="4" r="2.3" fill="#9ea8ef"/><rect x="9" y="6.5" width="8" height="7" rx="2.5" fill="#7b83eb"/><circle cx="8" cy="3.5" r="2.8" fill="#5059c9"/><rect x="1" y="5" width="10" height="10" rx="1" fill="#4b53bc"/><path d="M3.5,7.5 H8.5 M6,7.5 V13" stroke="#fff" stroke-width="1.4"/><circle cx="14" cy="14" r="3" fill="#fff"/></svg>
<div class="a" style="left:463px;top:574px;width:26px;height:2px;background:#d88848"></div>
<div class="a" style="left:492.5px;top:549px;width:32.5px;height:27px;background:#4e5e66"></div>
<svg class="ic" style="left:499.5px;top:553.5px" width="18" height="18"><circle cx="9" cy="9" r="8" fill="#d24726"/><path d="M9,1 A8,8 0 0,1 17,9 H9Z" fill="#ff8f6b"/><rect x="1" y="5" width="9" height="8" rx="1" fill="#c43e1c"/><path d="M4,11 V7 H6 C7.5,7 7.5,9.2 6,9.2 H4" stroke="#fff" stroke-width="1.2" fill="none"/></svg>
<div class="a" style="left:495px;top:574px;width:28px;height:2px;background:#88b8e0"></div>
<svg class="ic" style="left:818px;top:558px" width="10" height="7"><path d="M1,6 L5,2 L9,6" stroke="#e8e8e8" stroke-width="1.2" fill="none"/></svg>
<svg class="ic" style="left:834px;top:556px" width="10" height="13"><rect x="1" y="3" width="7" height="7" fill="none" stroke="#ddd" stroke-width="1.1"/><circle cx="4.5" cy="6.5" r="1.5" fill="#ddd"/><path d="M3,1 H6 M3,12 H6" stroke="#ddd"/></svg>
<svg class="ic" style="left:849px;top:557px" width="14" height="12"><path d="M2,9 C0,9 0,5 3,5 C3,2 8,1 9,4 C12,3 13,8 11,9Z" fill="#e8e8e8"/><circle cx="10" cy="8.5" r="3" fill="#e0303a"/></svg>
<svg class="ic" style="left:865px;top:557px" width="12" height="9"><rect x="1" y="2" width="10" height="6" fill="#e8e8e8"/><rect x="3" y="0.5" width="3" height="2" fill="#e8e8e8"/></svg>
<svg class="ic" style="left:881px;top:556px" width="12" height="11"><path d="M1,10 C1,5 5,1 11,1 M3.5,10 C3.5,6.5 6.5,3.5 11,3.5 M6,10 C6,8 8,6 11,6" stroke="#ccc" stroke-width="1" fill="none"/></svg>
<svg class="ic" style="left:897px;top:556px" width="13" height="12"><path d="M1,4 H3.5 L7,1 V11 L3.5,8 H1Z" fill="none" stroke="#e8e8e8" stroke-width="1"/><path d="M9,3.5 C10.5,5 10.5,7 9,8.5 M10.5,2 C13,4 13,8 10.5,10" stroke="#e8e8e8" stroke-width="0.9" fill="none"/></svg>
<div class="t" style="left:924.5px;top:553.5px;font-size:7.8px;color:#f0f0f0">14:23</div>
<div class="t" style="left:914.5px;top:566px;font-size:7.8px;color:#f0f0f0">30.03.2021</div>
<svg class="ic" style="left:965px;top:555px" width="22" height="17"><path d="M1.5,2 V13 M4.5,13 V3 L8,9 L11.5,3 V13 M14.5,1 V8" stroke="#fff" stroke-width="2" fill="none"/><circle cx="15.5" cy="12" r="3.8" fill="#333" stroke="#aaa" stroke-width="0.8"/></svg>
<svg class="ic" style="left:996px;top:556px" width="13" height="12"><path d="M1,1 H12 V9 H7 L5,11 V9 H1Z" fill="none" stroke="#e8e8e8" stroke-width="1"/></svg>


</body></html>
